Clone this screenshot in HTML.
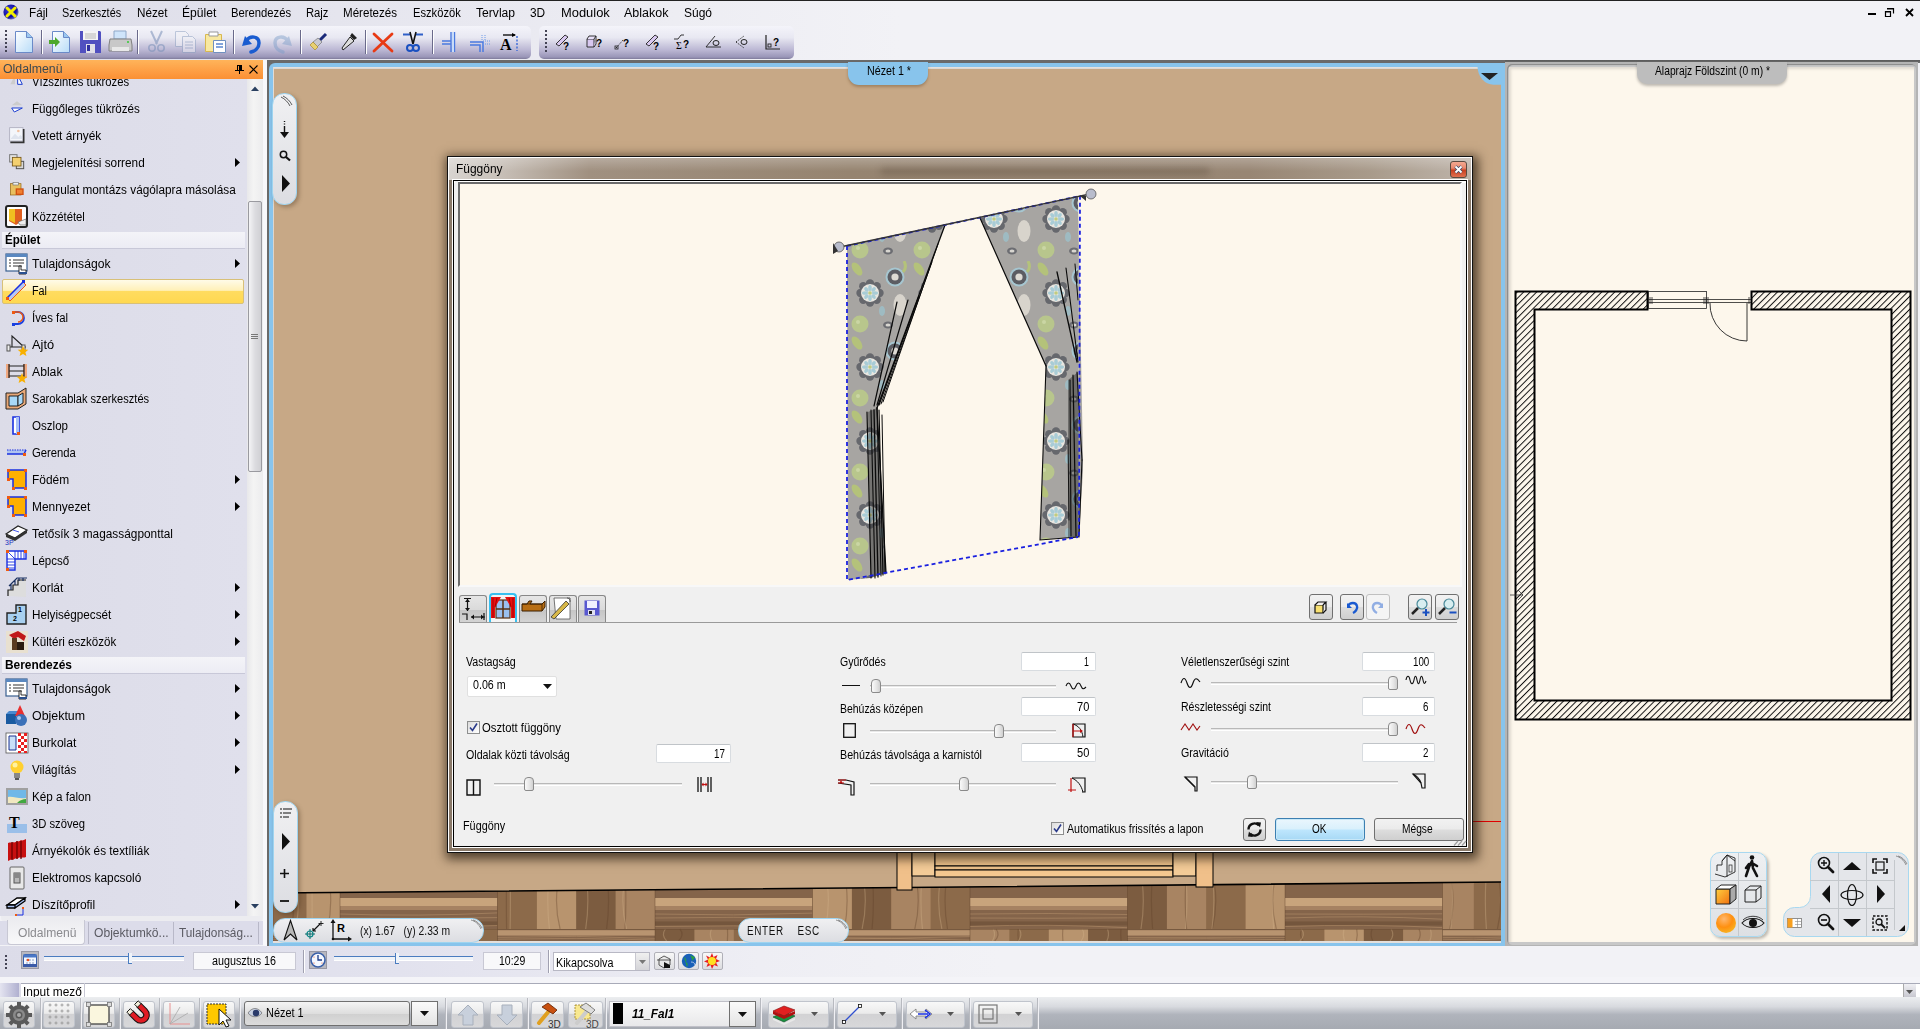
<!DOCTYPE html>
<html><head><meta charset="utf-8"><title>Függöny</title>
<style>
*{margin:0;padding:0;box-sizing:border-box}
html,body{width:1920px;height:1029px;overflow:hidden}
body{position:relative;background:#f2f2f6;font-family:"Liberation Sans",sans-serif;font-size:12px;color:#000}
.a{position:absolute}
.t{position:absolute;white-space:nowrap;line-height:1}
svg{position:absolute;overflow:visible}

</style></head><body>
<!-- top dark line + menubar -->
<div class="a" style="left:0;top:0;width:1920px;height:60px;background:linear-gradient(90deg,#dcdce8 0px,#e8e8f0 450px,#f2f2f6 900px,#f2f2f6 1920px)"></div>
<div class="a" style="left:0;top:0;width:1920px;height:1px;background:#222"></div>
<!-- app icon -->
<svg style="left:3px;top:4px" width="16" height="16" viewBox="0 0 16 16">
 <defs><radialGradient id="gi" cx="0.35" cy="0.35" r="0.7"><stop offset="0" stop-color="#3a3ad8"/><stop offset="0.7" stop-color="#1010a0"/><stop offset="1" stop-color="#8080c0"/></radialGradient></defs>
 <circle cx="8" cy="8" r="7.6" fill="url(#gi)"/>
 <path d="M4 4 L12 12 M12 4 L4 12" stroke="#f4f000" stroke-width="3" stroke-linecap="round"/>
</svg>
<!-- window buttons -->
<div class="a" style="left:1868px;top:13px;width:8px;height:2px;background:#000"></div>
<svg style="left:1885px;top:8px" width="9" height="9" viewBox="0 0 9 9"><path d="M0.5 3.5h5v5h-5z M2.5 0.5h6v5" fill="none" stroke="#000" stroke-width="1.2"/><path d="M0 3h6v1.5H0z M2 0h7v1.5H2z" fill="#000"/></svg>
<svg style="left:1905px;top:8px" width="9" height="9" viewBox="0 0 9 9"><path d="M1 1L8 8M8 1L1 8" stroke="#000" stroke-width="1.8"/></svg>

<!-- toolbar 1 -->
<div class="a" style="left:0;top:26px;width:531px;height:33px;border-radius:0 5px 5px 0;background:linear-gradient(180deg,#f4f4fa 0%,#e8e8f2 35%,#bcb8d4 72%,#9a96b8 94%,#7e7a9a 100%)"></div>
<div class="a" style="left:539px;top:26px;width:255px;height:33px;border-radius:5px;background:linear-gradient(180deg,#f4f4fa 0%,#e8e8f2 35%,#bcb8d4 72%,#9a96b8 94%,#7e7a9a 100%)"></div>
<!-- grips -->
<div class="a" style="left:5px;top:30px;width:2px;height:24px;background:repeating-linear-gradient(180deg,#445 0 2px,transparent 2px 4px)"></div>
<div class="a" style="left:545px;top:30px;width:2px;height:24px;background:repeating-linear-gradient(180deg,#445 0 2px,transparent 2px 4px)"></div>
<!-- separators -->
<div class="a" style="left:41px;top:30px;width:1px;height:24px;background:#6a6a8a;box-shadow:1px 0 0 #fff"></div>
<div class="a" style="left:137px;top:30px;width:1px;height:24px;background:#6a6a8a;box-shadow:1px 0 0 #fff"></div>
<div class="a" style="left:233px;top:30px;width:1px;height:24px;background:#6a6a8a;box-shadow:1px 0 0 #fff"></div>
<div class="a" style="left:300px;top:30px;width:1px;height:24px;background:#6a6a8a;box-shadow:1px 0 0 #fff"></div>
<div class="a" style="left:365px;top:30px;width:1px;height:24px;background:#6a6a8a;box-shadow:1px 0 0 #fff"></div>
<div class="a" style="left:432px;top:30px;width:1px;height:24px;background:#6a6a8a;box-shadow:1px 0 0 #fff"></div>
<!-- icons toolbar1 -->
<svg style="left:15px;top:31px" width="18" height="22" viewBox="0 0 18 22"><defs><linearGradient id="gp" x1="0" y1="0" x2="1" y2="1"><stop offset="0" stop-color="#fff"/><stop offset="1" stop-color="#b8dcf8"/></linearGradient></defs><path d="M0.5 0.5h11l6 6v15h-17z" fill="url(#gp)" stroke="#6a8ac8"/><path d="M11.5 0.5v6h6" fill="#9cc8f0" stroke="#6a8ac8"/></svg>
<svg style="left:49px;top:31px" width="22" height="22" viewBox="0 0 22 22"><path d="M3.5 0.5h11l6 6v15h-17z" fill="url(#gp)" stroke="#6a8ac8"/><path d="M14.5 0.5v6h6" fill="#9cc8f0" stroke="#6a8ac8"/><path d="M0 9h6v-3l5 5l-5 5v-3h-6z" fill="#4ca82c"/></svg>
<svg style="left:80px;top:31px" width="21" height="22" viewBox="0 0 21 22"><path d="M0 0h20l1 1v21h-21z" fill="#5050c0"/><rect x="3" y="0" width="15" height="9" fill="#f4f4f4"/><path d="M5 3h11M5 5h11M5 7h11" stroke="#aaa" stroke-width="0.8"/><rect x="6" y="13" width="9" height="9" fill="#e0e0e8"/><rect x="7" y="14" width="3" height="6" fill="#3030a0"/></svg>
<svg style="left:109px;top:31px" width="23" height="22" viewBox="0 0 23 22"><path d="M5 0h12v8h-12z" fill="#cfe4fa" stroke="#90a8c8"/><path d="M1 8h21l1 6v6h-23v-6z" fill="#c8c8c8" stroke="#808080"/><path d="M3 16h17v4h-17z" fill="#e8e8e8"/><circle cx="19" cy="11" r="1" fill="#3c3"/></svg>
<svg style="left:148px;top:31px" width="17" height="22" viewBox="0 0 17 22" opacity="0.55"><path d="M3 0l6 13M14 0l-6 13" stroke="#7a90b8" stroke-width="2"/><circle cx="4" cy="17" r="3.2" fill="none" stroke="#7a90b8" stroke-width="1.6"/><circle cx="13" cy="17" r="3.2" fill="none" stroke="#7a90b8" stroke-width="1.6"/></svg>
<svg style="left:175px;top:31px" width="21" height="22" viewBox="0 0 21 22" opacity="0.5"><path d="M0.5 0.5h10l3 3v12h-13z" fill="#f4f4f8" stroke="#8ca0c0"/><path d="M7.5 5.5h10l3 3v13h-13z" fill="#f4f4f8" stroke="#8ca0c0"/><path d="M10 11h8M10 14h8M10 17h8" stroke="#8ca0c0"/></svg>
<svg style="left:205px;top:31px" width="21" height="22" viewBox="0 0 21 22"><path d="M0.5 3.5h16v17h-16z" fill="#f8e8a0" stroke="#d8b850"/><path d="M4 1h9v4h-9z" fill="#fff" stroke="#999"/><path d="M8.5 9.5h12v12h-12z" fill="#fff" stroke="#7090c0"/><path d="M11 13h7M11 16h7" stroke="#5a86d0" stroke-width="1.5"/></svg>
<svg style="left:240px;top:31px" width="22" height="22" viewBox="0 0 22 22"><path d="M5 5 L2 15 L12 13" fill="#1a5cd0"/><path d="M6 10 C10 4 19 5 19 12 C19 17 15 20 11 21" fill="none" stroke="#1a5cd0" stroke-width="3.5" stroke-linecap="round"/></svg>
<svg style="left:272px;top:31px" width="22" height="22" viewBox="0 0 22 22" opacity="0.45"><path d="M17 5 L20 15 L10 13" fill="#7a9cc8"/><path d="M16 10 C12 4 3 5 3 12 C3 17 7 20 11 21" fill="none" stroke="#7a9cc8" stroke-width="3.5" stroke-linecap="round"/></svg>
<svg style="left:310px;top:33px" width="17" height="18" viewBox="0 0 17 18"><path d="M10 7l6-6" stroke="#1a2a7a" stroke-width="3"/><path d="M3 9l5-4l4 4l-5 5z" fill="#c8c8d0" stroke="#666" stroke-width="0.6"/><path d="M0 12l3-3l5 5l-3 3z" fill="#e8d070" stroke="#a08020" stroke-width="0.6"/></svg>
<svg style="left:341px;top:32px" width="17" height="20" viewBox="0 0 17 20"><path d="M11 1l5 5l-3 2l-4-4z" fill="#222"/><path d="M9 5l-8 11l1 2l11-9z" fill="#ddd" stroke="#222" stroke-width="1"/></svg>
<svg style="left:372px;top:32px" width="22" height="21" viewBox="0 0 22 21"><path d="M2 2L20 19M20 2L2 19" stroke="#e83a14" stroke-width="2.8" stroke-linecap="round"/></svg>
<svg style="left:403px;top:32px" width="20" height="21" viewBox="0 0 20 21"><path d="M0 2.5h7M13 2.5h7" stroke="#3060c8" stroke-width="2"/><path d="M7 0l3 12M13 0l-3 12" stroke="#111" stroke-width="1.6"/><circle cx="7" cy="16" r="3" fill="none" stroke="#1a50c0" stroke-width="2"/><circle cx="13" cy="16" r="3" fill="none" stroke="#1a50c0" stroke-width="2"/></svg>
<svg style="left:442px;top:32px" width="14" height="20" viewBox="0 0 14 20"><path d="M0 9h9M0 12h9" stroke="#4a7ae0" stroke-width="1.4"/><path d="M9 0v20M12.5 0v20" stroke="#4a7ae0" stroke-width="1.4"/><path d="M10 0v20h2v-20z" fill="#c8dcf8"/></svg>
<svg style="left:470px;top:35px" width="20" height="17" viewBox="0 0 20 17"><path d="M0 7h13v10M0 10h10v7" fill="none" stroke="#4a7ae0" stroke-width="1.5"/><path d="M12 0v6M15 0v6M13 6h7M13 9h7" stroke="#6a9ae8" stroke-width="1" stroke-dasharray="1 1"/></svg>
<svg style="left:500px;top:33px" width="19" height="19" viewBox="0 0 19 19"><path d="M3 2h12" stroke="#000" stroke-width="1.3"/><path d="M12 0l4 2l-4 2z" fill="#000"/><path d="M17 3v15" stroke="#3a6ad8" stroke-width="1.4" stroke-dasharray="2 1.5"/><text x="0" y="17" font-family="Liberation Serif" font-weight="bold" font-size="16">A</text></svg>
<!-- icons toolbar2 -->
<g></g>
<svg style="left:555px;top:34px" width="17" height="17" viewBox="0 0 17 17"><path d="M1 10l9-9l3 2l-9 9z" fill="#d8c8f0" stroke="#222" stroke-width="0.9"/><text x="8" y="16" font-family="Liberation Sans" font-weight="bold" font-size="10">?</text></svg>
<svg style="left:586px;top:34px" width="17" height="17" viewBox="0 0 17 17"><path d="M1 5h7v8h-7z" fill="#d8c8f0" stroke="#222" stroke-width="0.9"/><path d="M1 5l2-3h7l-2 3M8 13l2-3v-8" fill="#e8e0f8" stroke="#222" stroke-width="0.9"/><text x="10" y="13" font-family="Liberation Sans" font-weight="bold" font-size="10">?</text></svg>
<svg style="left:615px;top:34px" width="17" height="17" viewBox="0 0 17 17"><path d="M1 14l8-9" stroke="#222" stroke-width="1" stroke-dasharray="1.5 1.5"/><rect x="0" y="12" width="3" height="3" fill="none" stroke="#222" stroke-width="0.8"/><text x="8" y="13" font-family="Liberation Sans" font-weight="bold" font-size="10">?</text></svg>
<svg style="left:645px;top:34px" width="17" height="17" viewBox="0 0 17 17"><path d="M1 10l9-9l3 2l-9 9z" fill="#d8c8f0" stroke="#222" stroke-width="0.9"/><text x="8" y="16" font-family="Liberation Sans" font-weight="bold" font-size="10">?</text></svg>
<svg style="left:674px;top:34px" width="18" height="17" viewBox="0 0 18 17"><path d="M0 5h4l3-4h3" fill="none" stroke="#222" stroke-width="0.9"/><text x="2" y="15" font-family="Liberation Serif" font-size="10">Σ</text><text x="9" y="14" font-family="Liberation Sans" font-weight="bold" font-size="10">?</text></svg>
<svg style="left:705px;top:34px" width="17" height="14" viewBox="0 0 17 14"><path d="M1 13l9-11M1 13h15" fill="none" stroke="#222" stroke-width="0.9"/><ellipse cx="11" cy="9" rx="3" ry="2.5" fill="none" stroke="#222"/></svg>
<svg style="left:735px;top:35px" width="16" height="14" viewBox="0 0 16 14"><path d="M1 7l8-6M1 7l8 6" fill="none" stroke="#222" stroke-width="0.9" stroke-dasharray="1.5 1.2"/><ellipse cx="9" cy="7" rx="3" ry="2.5" fill="none" stroke="#222"/></svg>
<svg style="left:765px;top:35px" width="16" height="15" viewBox="0 0 16 15"><path d="M1 0v14h14" fill="none" stroke="#222" stroke-width="1.2"/><rect x="3" y="9" width="3" height="3" fill="none" stroke="#222" stroke-width="0.9"/><text x="8" y="11" font-family="Liberation Sans" font-weight="bold" font-size="10">?</text></svg>

<div class="t" id="f41" style="left:28.5px;top:7.44px;font-size:12.3px;transform-origin:0 0;transform:scaleX(0.9532)">Fájl</div>
<div class="t" id="f42" style="left:62.2px;top:7.44px;font-size:12.3px;transform-origin:0 0;transform:scaleX(0.8823)">Szerkesztés</div>
<div class="t" id="f43" style="left:136.6px;top:7.44px;font-size:12.3px;transform-origin:0 0;transform:scaleX(0.9525)">Nézet</div>
<div class="t" id="f44" style="left:182.1px;top:7.44px;font-size:12.3px;transform-origin:0 0;transform:scaleX(0.9835)">Épület</div>
<div class="t" id="f45" style="left:231.3px;top:7.44px;font-size:12.3px;transform-origin:0 0;transform:scaleX(0.9156)">Berendezés</div>
<div class="t" id="f46" style="left:306.3px;top:7.44px;font-size:12.3px;transform-origin:0 0;transform:scaleX(0.9143)">Rajz</div>
<div class="t" id="f47" style="left:343.4px;top:7.44px;font-size:12.3px;transform-origin:0 0;transform:scaleX(0.9421)">Méretezés</div>
<div class="t" id="f48" style="left:412.5px;top:7.44px;font-size:12.3px;transform-origin:0 0;transform:scaleX(0.9083)">Eszközök</div>
<div class="t" id="f49" style="left:476.4px;top:7.44px;font-size:12.3px;transform-origin:0 0;transform:scaleX(0.9864)">Tervlap</div>
<div class="t" id="f50" style="left:530.1px;top:7.44px;font-size:12.3px;transform-origin:0 0;transform:scaleX(0.9660)">3D</div>
<div class="t" id="f51" style="left:560.7px;top:7.44px;font-size:12.3px;transform-origin:0 0;transform:scaleX(1.0498)">Modulok</div>
<div class="t" id="f52" style="left:624.2px;top:7.44px;font-size:12.3px;transform-origin:0 0;transform:scaleX(1.0149)">Ablakok</div>
<div class="t" id="f53" style="left:683.5px;top:7.44px;font-size:12.3px;transform-origin:0 0;transform:scaleX(0.9750)">Súgó</div>
<!-- sidebar -->
<div class="a" style="left:0;top:60px;width:263px;height:19px;background:linear-gradient(180deg,#ffb45a,#fd9a40 70%,#fa9034)"></div>
<div class="t" id="f1" style="left:2.5px;top:63.34px;font-size:12.3px;color:#3c4a50;transform-origin:0 0;transform:scaleX(1.0005)">Oldalmenü</div>
<svg style="left:235px;top:65px" width="9" height="9" viewBox="0 0 9 9"><path d="M2 0h5v5h-5z" fill="#000"/><path d="M0 5h9v1h-9zM4 6h1v3h-1z" fill="#000"/><path d="M3 1h1v4h-1z" fill="#ff9a40"/></svg>
<svg style="left:249px;top:65px" width="9" height="9" viewBox="0 0 9 9"><path d="M0.5 0.5L8.5 8.5M8.5 0.5L0.5 8.5" stroke="#000" stroke-width="1.1"/></svg>
<div class="a" style="left:263px;top:60px;width:4px;height:886px;background:#f8f8fb"></div>
<div class="a" style="left:0;top:79px;width:247px;height:837px;background:linear-gradient(90deg,#dcdce8,#e0e0ec);overflow:hidden">
<svg style="left:9px;top:-6px" width="16" height="16" viewBox="0 0 24 24"><path d="M9 3v14h-7z" fill="#ccc"/><path d="M13 3v14h7z" fill="#fff" stroke="#1a3cd0" stroke-width="1.5"/></svg>
<div class="t" id="f2" style="left:32.3px;top:-3.50px;font-size:12px;transform-origin:0 0;transform:scaleX(0.9393)">Vízszintes tükrözés</div>
<svg style="left:9px;top:21px" width="16" height="16" viewBox="0 0 24 24"><path d="M4 8h16l-8-6z" fill="#ccc"/><path d="M4 12h16l-12 6z" fill="#fff" stroke="#1a3cd0" stroke-width="1.5"/></svg>
<div class="t" id="f3" style="left:32.3px;top:23.50px;font-size:12px;transform-origin:0 0;transform:scaleX(0.9685)">Függőleges tükrözés</div>
<svg style="left:9px;top:48px" width="16" height="16" viewBox="0 0 24 24"><rect x="1" y="1" width="20" height="20" fill="#f4f6fa" stroke="#aab" stroke-width="1.2"/><path d="M3 17l6-7l5 5l3-3l3 3v3h-17z" fill="#dfe4ee"/><circle cx="14" cy="6" r="2" fill="#f0c0a0"/><path d="M22 3v20h-20" fill="none" stroke="#333" stroke-width="2.5"/></svg>
<div class="t" id="f4" style="left:32.3px;top:50.50px;font-size:12px;transform-origin:0 0;transform:scaleX(0.9893)">Vetett árnyék</div>
<svg style="left:9px;top:75px" width="16" height="16" viewBox="0 0 24 24"><rect x="1" y="1" width="11" height="11" fill="#e8e8e8" stroke="#777" stroke-width="1.5"/><rect x="11" y="11" width="11" height="11" fill="#d8d8d8" stroke="#555" stroke-width="1.5"/><rect x="5" y="5" width="13" height="13" fill="#f4d070" stroke="#705010" stroke-width="1.2"/></svg>
<div class="t" id="f5" style="left:32.3px;top:77.50px;font-size:12px;transform-origin:0 0;transform:scaleX(0.9823)">Megjelenítési sorrend</div>
<svg style="left:235px;top:79px" width="5" height="9" viewBox="0 0 5 9"><path d="M0 0l5 4.5l-5 4.5z" fill="#000"/></svg>
<svg style="left:9px;top:102px" width="16" height="16" viewBox="0 0 24 24"><rect x="2" y="4" width="16" height="17" fill="#e8c060" stroke="#906010"/><rect x="6" y="2" width="8" height="4" fill="#eee" stroke="#777"/><rect x="10" y="11" width="12" height="10" fill="#d05010"/><rect x="12" y="13" width="8" height="6" fill="#f08030"/></svg>
<div class="t" id="f6" style="left:32.3px;top:104.50px;font-size:12px;transform-origin:0 0;transform:scaleX(0.9819)">Hangulat montázs vágólapra másolása</div>
<svg style="left:5px;top:126px" width="24" height="24" viewBox="0 0 24 24"><rect x="1" y="1" width="21" height="21" rx="2" fill="#fff" stroke="#222" stroke-width="2"/><path d="M4 4h13v12l-6 4l-7-4z" fill="#e06020"/><path d="M4 4h6v14l-6-3z" fill="#f0c020"/><path d="M13 17l8-3v6h-6z" fill="#eee" stroke="#555" stroke-width="0.6"/></svg>
<div class="t" id="f7" style="left:32.3px;top:131.50px;font-size:12px;transform-origin:0 0;transform:scaleX(0.9439)">Közzététel</div>
<div class="a" style="left:2px;top:153px;width:243px;height:17px;background:linear-gradient(180deg,#f4f4f8,#ececf4);border-bottom:1px solid #c8c8d8"></div>
<div class="t" id="f8" style="left:5px;top:155.30px;font-size:12px;font-weight:bold;transform-origin:0 0;transform:scaleX(0.9653)">Épület</div>
<svg style="left:5px;top:173px" width="24" height="24" viewBox="0 0 24 24"><rect x="1" y="2" width="21" height="17" fill="#fff" stroke="#3a6090" stroke-width="1.2"/><rect x="1" y="2" width="21" height="3" fill="#5a88c0"/><path d="M4 8h2M8 8h11M4 11h2M8 11h11M4 14h2M8 14h9" stroke="#333" stroke-width="1.1"/><path d="M14 22v-8h2v4h5v4z" fill="#fff" stroke="#000" stroke-width="0.8"/><rect x="14" y="20" width="8" height="2" fill="#2a5090"/></svg>
<div class="t" id="f9" style="left:32.3px;top:178.50px;font-size:12px;transform-origin:0 0;transform:scaleX(1.0115)">Tulajdonságok</div>
<svg style="left:235px;top:180px" width="5" height="9" viewBox="0 0 5 9"><path d="M0 0l5 4.5l-5 4.5z" fill="#000"/></svg>
<div class="a" style="left:2px;top:199.5px;width:242px;height:25px;border:1px solid #d8c078;border-radius:2px;background:linear-gradient(180deg,#fffbe8 0%,#fff0b8 45%,#ffdc60 50%,#ffd850 100%)"></div>
<svg style="left:5px;top:200px" width="24" height="24" viewBox="0 0 24 24"><path d="M2 19L18 3l3 3L5 22z" fill="#b8c8f0" stroke="#f05a10" stroke-width="1"/><path d="M2 19L19 2" stroke="#1a30e0" stroke-width="1.6"/><rect x="17" y="1" width="3" height="3" fill="#1a30e0"/><rect x="1" y="18" width="3" height="3" fill="#f05a10"/></svg>
<div class="t" id="f10" style="left:32.3px;top:205.50px;font-size:12px;transform-origin:0 0;transform:scaleX(0.8997)">Fal</div>
<svg style="left:5px;top:227px" width="24" height="24" viewBox="0 0 24 24"><path d="M8 6h5a6 6 0 0 1 0 12h-5" fill="none" stroke="#1a40e0" stroke-width="1.8"/><path d="M9 6h4a5 5 0 0 1 0 10" fill="none" stroke="#f05a10" stroke-width="1.5"/><rect x="7" y="5" width="3" height="3" fill="#f05a10"/><rect x="7" y="17" width="3" height="3" fill="#1a40e0"/></svg>
<div class="t" id="f11" style="left:32.3px;top:232.50px;font-size:12px;transform-origin:0 0;transform:scaleX(0.9470)">Íves fal</div>
<svg style="left:5px;top:254px" width="24" height="24" viewBox="0 0 24 24"><path d="M3 14h18" stroke="#222"/><rect x="2" y="12" width="3" height="6" fill="#eee" stroke="#555"/><path d="M7 14v-11l12 11" fill="none" stroke="#222" stroke-width="1.1"/><rect x="17" y="12" width="3" height="6" fill="#eee" stroke="#555"/><path d="M18 13l1.5 3.5l3.8 0.3l-2.9 2.4l1 3.7l-3.4-2l-3.4 2l1-3.7l-2.9-2.4l3.8-0.3z" fill="#f8b000"/></svg>
<div class="t" id="f12" style="left:32.3px;top:259.50px;font-size:12px;transform-origin:0 0;transform:scaleX(1.0683)">Ajtó</div>
<svg style="left:5px;top:281px" width="24" height="24" viewBox="0 0 24 24"><rect x="1" y="4" width="4" height="14" fill="#f0a880"/><rect x="18" y="4" width="4" height="14" fill="#f0a880"/><path d="M4 6h15M4 16h15M4 11h15" stroke="#222" stroke-width="1.2"/><path d="M4 4v14M19 4v14" stroke="#222" stroke-width="1.2"/><path d="M17 13l1.5 3.5l3.8 0.3l-2.9 2.4l1 3.7l-3.4-2l-3.4 2l1-3.7l-2.9-2.4l3.8-0.3z" fill="#f8b000"/></svg>
<div class="t" id="f13" style="left:32.3px;top:286.50px;font-size:12px;transform-origin:0 0;transform:scaleX(1.0156)">Ablak</div>
<svg style="left:5px;top:308px" width="24" height="24" viewBox="0 0 24 24"><path d="M1 6h12l8-5v16l-8 5h-12z" fill="#e8a878" stroke="#222" stroke-width="1"/><path d="M4 9h9v10h-9z" fill="#a8d8f8" stroke="#222"/><path d="M13 9l5-3v10l-5 3z" fill="#a8d8f8" stroke="#222"/></svg>
<div class="t" id="f14" style="left:32.3px;top:313.50px;font-size:12px;transform-origin:0 0;transform:scaleX(0.9240)">Sarokablak szerkesztés</div>
<svg style="left:5px;top:335px" width="24" height="24" viewBox="0 0 24 24"><path d="M8 3h6v17h-6z" fill="#fff" stroke="#1a30e0" stroke-width="1.6"/><path d="M11 3h3v17h-3z" fill="#a8c0f8"/><rect x="12" y="18" width="3" height="3" fill="#f05a10"/></svg>
<div class="t" id="f15" style="left:32.3px;top:340.50px;font-size:12px;transform-origin:0 0;transform:scaleX(0.9636)">Oszlop</div>
<svg style="left:5px;top:362px" width="24" height="24" viewBox="0 0 24 24"><path d="M2 9h19l-2 4h-17z" fill="#b0c4f0"/><path d="M2 13h17l2-4" fill="none" stroke="#1a30e0" stroke-width="1.5"/><path d="M2 9h19" stroke="#1a30e0" stroke-width="1" stroke-dasharray="1.5 1"/><rect x="18" y="12" width="3" height="3" fill="#f05a10"/></svg>
<div class="t" id="f16" style="left:32.3px;top:367.50px;font-size:12px;transform-origin:0 0;transform:scaleX(0.9400)">Gerenda</div>
<svg style="left:5px;top:389px" width="24" height="24" viewBox="0 0 24 24"><path d="M3 2h18v18h-13v-9h-5z" fill="#ffb000" stroke="#1a30e0" stroke-width="1.5"/><rect x="2" y="1" width="3" height="3" fill="#f05a10"/><rect x="19" y="1" width="3" height="3" fill="#f05a10"/><rect x="19" y="19" width="3" height="3" fill="#f05a10"/><rect x="7" y="19" width="3" height="3" fill="#f05a10"/><rect x="2" y="10" width="3" height="3" fill="#f05a10"/></svg>
<div class="t" id="f17" style="left:32.3px;top:394.50px;font-size:12px;transform-origin:0 0;transform:scaleX(0.9931)">Födém</div>
<svg style="left:235px;top:396px" width="5" height="9" viewBox="0 0 5 9"><path d="M0 0l5 4.5l-5 4.5z" fill="#000"/></svg>
<svg style="left:5px;top:416px" width="24" height="24" viewBox="0 0 24 24"><path d="M3 2h18v18h-13v-9h-5z" fill="#ffb000" stroke="#1a30e0" stroke-width="1.5"/><rect x="2" y="1" width="3" height="3" fill="#f05a10"/><rect x="19" y="1" width="3" height="3" fill="#f05a10"/><rect x="19" y="19" width="3" height="3" fill="#f05a10"/><rect x="7" y="19" width="3" height="3" fill="#f05a10"/><rect x="2" y="10" width="3" height="3" fill="#f05a10"/></svg>
<div class="t" id="f18" style="left:32.3px;top:421.50px;font-size:12px;transform-origin:0 0;transform:scaleX(0.9931)">Mennyezet</div>
<svg style="left:235px;top:423px" width="5" height="9" viewBox="0 0 5 9"><path d="M0 0l5 4.5l-5 4.5z" fill="#000"/></svg>
<svg style="left:5px;top:443px" width="24" height="24" viewBox="0 0 24 24"><path d="M1 12l12-8l9 4l-12 8z" fill="#fff" stroke="#222" stroke-width="1.2"/><path d="M1 12v3l9 4l12-8v-3l-12 8z" fill="#333"/><text x="0" y="23" font-family="Liberation Sans" font-size="7" fill="#1a30c0">3P</text><path d="M8 8l6 2" stroke="#1a30e0" stroke-width="0.8"/></svg>
<div class="t" id="f19" style="left:32.3px;top:448.50px;font-size:12px;transform-origin:0 0;transform:scaleX(0.9876)">Tetősík 3 magasságponttal</div>
<svg style="left:5px;top:470px" width="24" height="24" viewBox="0 0 24 24"><path d="M2 2h19v8h-11v11h-8z" fill="#fff" stroke="#1a30e0" stroke-width="1.4"/><path d="M10 2v8M13 2v8M16 2v8M19 2v8M2 10h8M2 13h8M2 16h8M2 19h8M2 2l8 8" stroke="#1a30e0" stroke-width="0.9"/><rect x="1" y="1" width="3" height="3" fill="#f05a10"/><rect x="19" y="1" width="3" height="3" fill="#f05a10"/><rect x="1" y="19" width="3" height="3" fill="#f05a10"/></svg>
<div class="t" id="f20" style="left:32.3px;top:475.50px;font-size:12px;transform-origin:0 0;transform:scaleX(0.9586)">Lépcső</div>
<svg style="left:5px;top:497px" width="24" height="24" viewBox="0 0 24 24"><path d="M3 20v-6h5v-5h5v-5h8v17z" fill="#ddd"/><path d="M3 20v-6h5v-5h5v-5h8" fill="none" stroke="#222" stroke-width="1.2"/><path d="M4 10l8-8h10M6 8v6M10 4v5M14 2v3M18 2v3" stroke="#1a3060" stroke-width="1.2" fill="none"/></svg>
<div class="t" id="f21" style="left:32.3px;top:502.50px;font-size:12px;transform-origin:0 0;transform:scaleX(0.9981)">Korlát</div>
<svg style="left:235px;top:504px" width="5" height="9" viewBox="0 0 5 9"><path d="M0 0l5 4.5l-5 4.5z" fill="#000"/></svg>
<svg style="left:5px;top:524px" width="24" height="24" viewBox="0 0 24 24"><path d="M2 21v-11h9v-8h10v19z" fill="#a8d0f0" stroke="#222" stroke-width="1.4"/><text x="13" y="9" font-family="Liberation Sans" font-weight="bold" font-size="7">1</text><text x="8" y="18" font-family="Liberation Sans" font-weight="bold" font-size="7">2</text></svg>
<div class="t" id="f22" style="left:32.3px;top:529.50px;font-size:12px;transform-origin:0 0;transform:scaleX(0.9745)">Helyiségpecsét</div>
<svg style="left:235px;top:531px" width="5" height="9" viewBox="0 0 5 9"><path d="M0 0l5 4.5l-5 4.5z" fill="#000"/></svg>
<svg style="left:5px;top:551px" width="24" height="24" viewBox="0 0 24 24"><rect x="1" y="1" width="22" height="22" fill="#e8e0d0"/><path d="M4 5l9-4l8 5l-2 5l-6-4l-4 2z" fill="#c01818"/><path d="M7 8h5v12h-5z" fill="#5a3a20"/><path d="M12 12h7v8h-7z" fill="#2a1a10"/></svg>
<div class="t" id="f23" style="left:32.3px;top:556.50px;font-size:12px;transform-origin:0 0;transform:scaleX(0.9648)">Kültéri eszközök</div>
<svg style="left:235px;top:558px" width="5" height="9" viewBox="0 0 5 9"><path d="M0 0l5 4.5l-5 4.5z" fill="#000"/></svg>
<div class="a" style="left:2px;top:578px;width:243px;height:17px;background:linear-gradient(180deg,#f4f4f8,#ececf4);border-bottom:1px solid #c8c8d8"></div>
<div class="t" id="f24" style="left:5px;top:580.30px;font-size:12px;font-weight:bold;transform-origin:0 0;transform:scaleX(0.9929)">Berendezés</div>
<svg style="left:5px;top:598px" width="24" height="24" viewBox="0 0 24 24"><rect x="1" y="2" width="21" height="17" fill="#fff" stroke="#3a6090" stroke-width="1.2"/><rect x="1" y="2" width="21" height="3" fill="#5a88c0"/><path d="M4 8h2M8 8h11M4 11h2M8 11h11M4 14h2M8 14h9" stroke="#333" stroke-width="1.1"/><path d="M14 22v-8h2v4h5v4z" fill="#fff" stroke="#000" stroke-width="0.8"/><rect x="14" y="20" width="8" height="2" fill="#2a5090"/></svg>
<div class="t" id="f25" style="left:32.3px;top:603.50px;font-size:12px;transform-origin:0 0;transform:scaleX(1.0115)">Tulajdonságok</div>
<svg style="left:235px;top:605px" width="5" height="9" viewBox="0 0 5 9"><path d="M0 0l5 4.5l-5 4.5z" fill="#000"/></svg>
<svg style="left:5px;top:625px" width="24" height="24" viewBox="0 0 24 24"><path d="M1 10h10v10h-10z" fill="#1a5aa0"/><path d="M1 10l3-3h10l-3 3z" fill="#4a8ad0"/><path d="M15 1l-5 11h10z" fill="#e83030"/><circle cx="16" cy="16" r="6" fill="#3a70b8"/><circle cx="14" cy="14" r="2" fill="#a8c8f0"/></svg>
<div class="t" id="f26" style="left:32.3px;top:630.50px;font-size:12px;transform-origin:0 0;transform:scaleX(1.0339)">Objektum</div>
<svg style="left:235px;top:632px" width="5" height="9" viewBox="0 0 5 9"><path d="M0 0l5 4.5l-5 4.5z" fill="#000"/></svg>
<svg style="left:5px;top:652px" width="24" height="24" viewBox="0 0 24 24"><rect x="1" y="2" width="22" height="20" fill="#fff" stroke="#555" stroke-width="0.8"/><path d="M4 5h7v14h-7z" fill="#c8e0f8" stroke="#1a3090"/><path d="M13 2h3v3h-3zM19 2h3v3h-3zM16 5h3v3h-3zM13 8h3v3h-3zM19 8h3v3h-3zM16 11h3v3h-3zM13 14h3v3h-3zM19 14h3v3h-3zM16 17h3v3h-3zM13 20h3v2h-3zM19 20h3v2h-3z" fill="#e82020"/></svg>
<div class="t" id="f27" style="left:32.3px;top:657.50px;font-size:12px;transform-origin:0 0;transform:scaleX(1.0084)">Burkolat</div>
<svg style="left:235px;top:659px" width="5" height="9" viewBox="0 0 5 9"><path d="M0 0l5 4.5l-5 4.5z" fill="#000"/></svg>
<svg style="left:5px;top:679px" width="24" height="24" viewBox="0 0 24 24"><circle cx="12" cy="9" r="6.5" fill="#ffd030"/><circle cx="10" cy="7" r="2.5" fill="#fff2a0"/><rect x="9" y="15" width="6" height="5" fill="#888"/><rect x="10" y="20" width="4" height="2" fill="#555"/></svg>
<div class="t" id="f28" style="left:32.3px;top:684.50px;font-size:12px;transform-origin:0 0;transform:scaleX(0.9648)">Világítás</div>
<svg style="left:235px;top:686px" width="5" height="9" viewBox="0 0 5 9"><path d="M0 0l5 4.5l-5 4.5z" fill="#000"/></svg>
<svg style="left:5px;top:706px" width="24" height="24" viewBox="0 0 24 24"><rect x="1" y="3" width="22" height="17" fill="#a0a0a0"/><rect x="3" y="5" width="18" height="13" fill="#70b8e8"/><path d="M3 12c5-1 10 2 18 1v5h-18z" fill="#f0e8c0"/><path d="M12 18c3-3 6-4 9-4v4z" fill="#40a840"/></svg>
<div class="t" id="f29" style="left:32.3px;top:711.50px;font-size:12px;transform-origin:0 0;transform:scaleX(0.9733)">Kép a falon</div>
<svg style="left:5px;top:733px" width="24" height="24" viewBox="0 0 24 24"><rect x="2" y="12" width="20" height="9" fill="#8ab8e8" opacity="0.8"/><text x="4" y="16" font-family="Liberation Serif" font-weight="bold" font-size="16">T</text></svg>
<div class="t" id="f30" style="left:32.3px;top:738.50px;font-size:12px;transform-origin:0 0;transform:scaleX(0.9365)">3D szöveg</div>
<svg style="left:5px;top:760px" width="24" height="24" viewBox="0 0 24 24"><path d="M3 4c2-1 4 0 5-1c1 1 3 0 4-1c1 1 3 0 4-1c1 1 3 0 5-1v18c-2 1-4 0-5 1c-1-1-3 0-4 1c-1-1-3 0-4 1c-1-1-3 0-5 1z" fill="#c81010"/><path d="M7 3v18M12 2v18M16 2v18" stroke="#600" stroke-width="1.2"/></svg>
<div class="t" id="f31" style="left:32.3px;top:765.50px;font-size:12px;transform-origin:0 0;transform:scaleX(0.9825)">Árnyékolók és textíliák</div>
<svg style="left:5px;top:787px" width="24" height="24" viewBox="0 0 24 24"><rect x="5" y="1" width="14" height="22" rx="1" fill="#e8e8e8" stroke="#666"/><rect x="9" y="7" width="6" height="10" fill="#b8b8b8" stroke="#555"/><rect x="9" y="7" width="6" height="5" fill="#888"/></svg>
<div class="t" id="f32" style="left:32.3px;top:792.50px;font-size:12px;transform-origin:0 0;transform:scaleX(0.9872)">Elektromos kapcsoló</div>
<svg style="left:5px;top:814px" width="24" height="24" viewBox="0 0 24 24"><path d="M2 12l10-7l8 0l-10 7z" fill="#fff" stroke="#000" stroke-width="1.3"/><path d="M2 12v3l8-0v-3zM10 15l10-7v-3l-10 7z" fill="#a8c0f0" stroke="#000" stroke-width="1.3"/><path d="M11 22h7v-7" fill="none" stroke="#1a30e0" stroke-width="1"/><rect x="10" y="21" width="2" height="2" fill="#f05a10"/><rect x="17" y="14" width="2" height="2" fill="#f05a10"/></svg>
<div class="t" id="f33" style="left:32.3px;top:819.50px;font-size:12px;transform-origin:0 0;transform:scaleX(0.9975)">Díszítőprofil</div>
<svg style="left:235px;top:821px" width="5" height="9" viewBox="0 0 5 9"><path d="M0 0l5 4.5l-5 4.5z" fill="#000"/></svg>
</div>
<div class="a" style="left:247px;top:79px;width:16px;height:837px;background:linear-gradient(90deg,#e8e8ea,#f4f4f4 40%,#ececee)"></div>
<svg style="left:251px;top:86px" width="8" height="5" viewBox="0 0 8 5"><path d="M0 5l4-4.5l4 4.5z" fill="#2a4060"/></svg>
<svg style="left:251px;top:904px" width="8" height="5" viewBox="0 0 8 5"><path d="M0 0l4 4.5l4-4.5z" fill="#2a4060"/></svg>
<div class="a" style="left:248px;top:201px;width:14px;height:271px;border:1px solid #9a9aa0;border-radius:2px;background:linear-gradient(90deg,#f4f4f6,#dcdce0 50%,#d0d0d4)"></div>
<div class="a" style="left:251px;top:334px;width:7px;height:6px;background:repeating-linear-gradient(180deg,#777 0 1px,transparent 1px 2px)"></div>
<div class="a" style="left:1px;top:916px;width:262px;height:5px;background:#ececf0;border-radius:0 0 3px 3px"></div>
<div class="a" style="left:0;top:921px;width:263px;height:24px;background:#dcdcea"></div>
<div class="a" style="left:7px;top:920px;width:78px;height:25px;border-radius:0 0 4px 4px;background:linear-gradient(180deg,#ececf0,#f8f8fa);border:1px solid #c8c8d4;border-top:none"></div>
<div class="t" id="f34" style="left:17.6px;top:927.30px;font-size:12px;color:#8a8a8e;transform-origin:0 0;transform:scaleX(1.0064)">Oldalmenü</div>
<div class="a" style="left:88px;top:922px;width:1px;height:22px;background:#b8b8c8"></div>
<div class="t" id="f35" style="left:94.2px;top:927.30px;font-size:12px;color:#5a5a62;transform-origin:0 0;transform:scaleX(1.0077)">Objektumkö...</div>
<div class="a" style="left:173px;top:922px;width:1px;height:22px;background:#b8b8c8"></div>
<div class="t" id="f36" style="left:179.3px;top:927.30px;font-size:12px;color:#5a5a62;transform-origin:0 0;transform:scaleX(0.9862)">Tulajdonság...</div>
<div class="a" style="left:258px;top:922px;width:1px;height:22px;background:#b8b8c8"></div>
<div class="a" style="left:267px;top:60px;width:1653px;height:3px;background:linear-gradient(180deg,#5a5a5a,#707070)"></div>
<div class="a" style="left:267px;top:60px;width:1238px;height:887px;background:#6a6a6a"></div>
<div class="a" style="left:269px;top:63px;width:1236px;height:884px;background:#88c4ec;border-radius:6px 0 0 0"></div>
<div class="a" style="left:273px;top:67px;width:1228px;height:876px;background:#c7a886;overflow:hidden">
<div class="a" style="left:0;top:0;width:1228px;height:2px;background:linear-gradient(180deg,#e8e6e4,#d8d2cc)"></div>
<div class="a" style="left:0;top:0;width:1px;height:876px;background:linear-gradient(180deg,#e0dcd8,#c8b8a4)"></div>
<svg style="left:0;top:0" width="1228" height="876" viewBox="0 0 1228 876">
<defs><clipPath id="fl"><path d="M0 826 L467 822 L1228 815 L1228 876 L0 876z"/></clipPath></defs>
<g clip-path="url(#fl)">
<rect x="0" y="810" width="1228" height="66" fill="#8c6a4c"/>
<defs>
<linearGradient id="wh" x1="0" y1="0" x2="0" y2="1"><stop offset="0" stop-color="#866850"/><stop offset="0.22" stop-color="#7a5c44"/><stop offset="0.32" stop-color="#c4a682"/><stop offset="0.5" stop-color="#b4946e"/><stop offset="0.62" stop-color="#80624a"/><stop offset="1" stop-color="#7a5c44"/></linearGradient>
<linearGradient id="wv" x1="0" y1="0" x2="1" y2="0"><stop offset="0" stop-color="#7a5636"/><stop offset="0.3" stop-color="#9c7654"/><stop offset="0.5" stop-color="#b89068"/><stop offset="0.7" stop-color="#8a6446"/><stop offset="1" stop-color="#9e7a58"/></linearGradient>
<linearGradient id="wv2" x1="0" y1="0" x2="1" y2="0"><stop offset="0" stop-color="#b89470"/><stop offset="0.35" stop-color="#d0b08a"/><stop offset="0.6" stop-color="#a8845e"/><stop offset="1" stop-color="#8c6a4c"/></linearGradient>
<linearGradient id="wh2" x1="0" y1="0" x2="0" y2="1"><stop offset="0" stop-color="#9a7858"/><stop offset="0.4" stop-color="#c4a07a"/><stop offset="0.7" stop-color="#8a6648"/><stop offset="1" stop-color="#a07c5c"/></linearGradient>
</defs>
<rect x="0.0" y="812" width="34.0" height="50" fill="#8c6a4a"/>
<path d="M19.6 812 Q22.0 837.0 18.9 862" stroke="#5e4028" stroke-width="1.2" opacity="0.35" fill="none"/>
<path d="M23.7 812 Q28.1 837.0 22.3 862" stroke="#d4b48c" stroke-width="1.2" opacity="0.35" fill="none"/>
<rect x="33.5" y="812" width="34.0" height="50" fill="#b8946e"/>
<path d="M55.9 812 Q60.1 837.0 54.6 862" stroke="#5e4028" stroke-width="1.2" opacity="0.35" fill="none"/>
<path d="M39.2 812 Q38.9 837.0 39.3 862" stroke="#d4b48c" stroke-width="1.2" opacity="0.35" fill="none"/>
<path d="M0 812v50" stroke="#5a402a" stroke-width="0.8" opacity="0.5"/>
<rect x="67.0" y="812" width="157.5" height="50" fill="#84644a"/>
<rect x="67.0" y="831.0" width="157.5" height="8.0" fill="#c8a47c"/>
<rect x="67.0" y="839.0" width="157.5" height="4.0" fill="#a68262"/>
<rect x="67.0" y="854.5" width="157.5" height="4.0" fill="#6e5038" opacity="0.7"/>
<path d="M67.0 847.0 Q145.8 849.7 224.5 845.9" stroke="#c09c74" stroke-width="1" opacity="0.45" fill="none"/>
<path d="M67.0 851.0 Q145.8 851.9 224.5 850.6" stroke="#c09c74" stroke-width="1" opacity="0.45" fill="none"/>
<path d="M67.0 859.5 Q145.8 861.9 224.5 858.5" stroke="#c09c74" stroke-width="1" opacity="0.45" fill="none"/>
<path d="M67.0 812v50" stroke="#5a402a" stroke-width="0.8" opacity="0.5"/>
<rect x="224.5" y="812" width="39.9" height="50" fill="#8c6a4a"/>
<path d="M233.5 812 Q233.2 837.0 233.6 862" stroke="#5e4028" stroke-width="1.2" opacity="0.35" fill="none"/>
<path d="M237.2 812 Q237.6 837.0 237.1 862" stroke="#d4b48c" stroke-width="1.2" opacity="0.35" fill="none"/>
<rect x="263.9" y="812" width="39.9" height="50" fill="#b8946e"/>
<path d="M285.6 812 Q280.7 837.0 287.1 862" stroke="#5e4028" stroke-width="1.2" opacity="0.35" fill="none"/>
<path d="M275.8 812 Q273.5 837.0 276.4 862" stroke="#d4b48c" stroke-width="1.2" opacity="0.35" fill="none"/>
<rect x="303.2" y="812" width="39.9" height="50" fill="#7c5c40"/>
<path d="M334.4 812 Q337.1 837.0 333.6 862" stroke="#5e4028" stroke-width="1.2" opacity="0.35" fill="none"/>
<path d="M313.6 812 Q316.5 837.0 312.7 862" stroke="#d4b48c" stroke-width="1.2" opacity="0.35" fill="none"/>
<rect x="342.6" y="812" width="39.9" height="50" fill="#a88462"/>
<path d="M352.4 812 Q353.5 837.0 352.0 862" stroke="#5e4028" stroke-width="1.2" opacity="0.35" fill="none"/>
<path d="M352.0 812 Q347.0 837.0 353.5 862" stroke="#d4b48c" stroke-width="1.2" opacity="0.35" fill="none"/>
<path d="M224.5 812v50" stroke="#5a402a" stroke-width="0.8" opacity="0.5"/>
<rect x="382.0" y="812" width="157.5" height="50" fill="#84644a"/>
<rect x="382.0" y="831.0" width="157.5" height="8.0" fill="#c8a47c"/>
<rect x="382.0" y="839.0" width="157.5" height="4.0" fill="#a68262"/>
<rect x="382.0" y="854.5" width="157.5" height="4.0" fill="#6e5038" opacity="0.7"/>
<path d="M382.0 847.0 Q460.8 849.2 539.5 846.1" stroke="#c09c74" stroke-width="1" opacity="0.45" fill="none"/>
<path d="M382.0 851.0 Q460.8 849.3 539.5 851.7" stroke="#c09c74" stroke-width="1" opacity="0.45" fill="none"/>
<path d="M382.0 859.5 Q460.8 857.8 539.5 860.2" stroke="#c09c74" stroke-width="1" opacity="0.45" fill="none"/>
<path d="M382.0 812v50" stroke="#5a402a" stroke-width="0.8" opacity="0.5"/>
<rect x="539.5" y="812" width="39.9" height="50" fill="#b8946e"/>
<path d="M572.5 812 Q576.2 837.0 571.4 862" stroke="#5e4028" stroke-width="1.2" opacity="0.35" fill="none"/>
<path d="M553.4 812 Q558.0 837.0 552.0 862" stroke="#d4b48c" stroke-width="1.2" opacity="0.35" fill="none"/>
<rect x="578.9" y="812" width="39.9" height="50" fill="#7c5c40"/>
<path d="M599.6 812 Q601.4 837.0 599.1 862" stroke="#5e4028" stroke-width="1.2" opacity="0.35" fill="none"/>
<path d="M590.4 812 Q594.8 837.0 589.1 862" stroke="#d4b48c" stroke-width="1.2" opacity="0.35" fill="none"/>
<rect x="618.2" y="812" width="39.9" height="50" fill="#a88462"/>
<path d="M643.2 812 Q647.9 837.0 641.8 862" stroke="#5e4028" stroke-width="1.2" opacity="0.35" fill="none"/>
<path d="M648.8 812 Q646.8 837.0 649.4 862" stroke="#d4b48c" stroke-width="1.2" opacity="0.35" fill="none"/>
<rect x="657.6" y="812" width="39.9" height="50" fill="#8c6a4a"/>
<path d="M673.5 812 Q670.1 837.0 674.5 862" stroke="#5e4028" stroke-width="1.2" opacity="0.35" fill="none"/>
<path d="M667.5 812 Q663.2 837.0 668.9 862" stroke="#d4b48c" stroke-width="1.2" opacity="0.35" fill="none"/>
<path d="M539.5 812v50" stroke="#5a402a" stroke-width="0.8" opacity="0.5"/>
<rect x="697.0" y="812" width="157.5" height="50" fill="#84644a"/>
<rect x="697.0" y="831.0" width="157.5" height="8.0" fill="#c8a47c"/>
<rect x="697.0" y="839.0" width="157.5" height="4.0" fill="#a68262"/>
<rect x="697.0" y="854.5" width="157.5" height="4.0" fill="#6e5038" opacity="0.7"/>
<path d="M697.0 847.0 Q775.8 845.8 854.5 847.5" stroke="#c09c74" stroke-width="1" opacity="0.45" fill="none"/>
<path d="M697.0 851.0 Q775.8 851.6 854.5 850.8" stroke="#c09c74" stroke-width="1" opacity="0.45" fill="none"/>
<path d="M697.0 859.5 Q775.8 856.5 854.5 860.7" stroke="#c09c74" stroke-width="1" opacity="0.45" fill="none"/>
<path d="M697.0 812v50" stroke="#5a402a" stroke-width="0.8" opacity="0.5"/>
<rect x="854.5" y="812" width="39.9" height="50" fill="#7c5c40"/>
<path d="M879.1 812 Q877.5 837.0 879.6 862" stroke="#5e4028" stroke-width="1.2" opacity="0.35" fill="none"/>
<path d="M868.9 812 Q872.1 837.0 868.0 862" stroke="#d4b48c" stroke-width="1.2" opacity="0.35" fill="none"/>
<rect x="893.9" y="812" width="39.9" height="50" fill="#a88462"/>
<path d="M913.0 812 Q911.2 837.0 913.6 862" stroke="#5e4028" stroke-width="1.2" opacity="0.35" fill="none"/>
<path d="M913.0 812 Q915.1 837.0 912.4 862" stroke="#d4b48c" stroke-width="1.2" opacity="0.35" fill="none"/>
<rect x="933.2" y="812" width="39.9" height="50" fill="#8c6a4a"/>
<path d="M940.7 812 Q945.5 837.0 939.3 862" stroke="#5e4028" stroke-width="1.2" opacity="0.35" fill="none"/>
<path d="M939.8 812 Q942.3 837.0 939.0 862" stroke="#d4b48c" stroke-width="1.2" opacity="0.35" fill="none"/>
<rect x="972.6" y="812" width="39.9" height="50" fill="#b8946e"/>
<path d="M1001.8 812 Q997.0 837.0 1003.3 862" stroke="#5e4028" stroke-width="1.2" opacity="0.35" fill="none"/>
<path d="M1000.2 812 Q998.9 837.0 1000.6 862" stroke="#d4b48c" stroke-width="1.2" opacity="0.35" fill="none"/>
<path d="M854.5 812v50" stroke="#5a402a" stroke-width="0.8" opacity="0.5"/>
<rect x="1012.0" y="812" width="157.5" height="50" fill="#84644a"/>
<rect x="1012.0" y="831.0" width="157.5" height="8.0" fill="#c8a47c"/>
<rect x="1012.0" y="839.0" width="157.5" height="4.0" fill="#a68262"/>
<rect x="1012.0" y="854.5" width="157.5" height="4.0" fill="#6e5038" opacity="0.7"/>
<path d="M1012.0 847.0 Q1090.8 847.5 1169.5 846.8" stroke="#c09c74" stroke-width="1" opacity="0.45" fill="none"/>
<path d="M1012.0 851.0 Q1090.8 848.1 1169.5 852.2" stroke="#c09c74" stroke-width="1" opacity="0.45" fill="none"/>
<path d="M1012.0 859.5 Q1090.8 856.8 1169.5 860.6" stroke="#c09c74" stroke-width="1" opacity="0.45" fill="none"/>
<path d="M1012.0 812v50" stroke="#5a402a" stroke-width="0.8" opacity="0.5"/>
<rect x="1169.5" y="812" width="31.8" height="50" fill="#a88462"/>
<path d="M1178.1 812 Q1182.7 837.0 1176.8 862" stroke="#5e4028" stroke-width="1.2" opacity="0.35" fill="none"/>
<path d="M1178.5 812 Q1181.0 837.0 1177.7 862" stroke="#d4b48c" stroke-width="1.2" opacity="0.35" fill="none"/>
<rect x="1200.8" y="812" width="31.8" height="50" fill="#8c6a4a"/>
<path d="M1225.8 812 Q1230.2 837.0 1224.4 862" stroke="#5e4028" stroke-width="1.2" opacity="0.35" fill="none"/>
<path d="M1213.0 812 Q1211.5 837.0 1213.4 862" stroke="#d4b48c" stroke-width="1.2" opacity="0.35" fill="none"/>
<path d="M1169.5 812v50" stroke="#5a402a" stroke-width="0.8" opacity="0.5"/>
<rect x="0" y="862" width="67.0" height="12" fill="#84644a"/>
<rect x="0" y="863.2" width="67.0" height="5.4" fill="#b89470"/>
<path d="M0 870.4 Q33.5 870.5 67.0 870.3" stroke="#c09c74" stroke-width="1" opacity="0.45" fill="none"/>
<path d="M0 872.2 Q33.5 873.9 67.0 871.5" stroke="#c09c74" stroke-width="1" opacity="0.45" fill="none"/>
<path d="M0 862v12" stroke="#5a402a" stroke-width="0.8" opacity="0.5"/>
<rect x="67.0" y="862" width="39.9" height="12" fill="#b8946e"/>
<path d="M75.9 862 Q78.4 868.0 75.1 874" stroke="#5e4028" stroke-width="1.2" opacity="0.35" fill="none"/>
<path d="M94.9 862 Q98.5 868.0 93.8 874" stroke="#d4b48c" stroke-width="1.2" opacity="0.35" fill="none"/>
<rect x="106.4" y="862" width="39.9" height="12" fill="#7c5c40"/>
<path d="M113.3 862 Q117.7 868.0 112.0 874" stroke="#5e4028" stroke-width="1.2" opacity="0.35" fill="none"/>
<path d="M114.8 862 Q113.2 868.0 115.3 874" stroke="#d4b48c" stroke-width="1.2" opacity="0.35" fill="none"/>
<rect x="145.8" y="862" width="39.9" height="12" fill="#a88462"/>
<path d="M168.5 862 Q172.7 868.0 167.2 874" stroke="#5e4028" stroke-width="1.2" opacity="0.35" fill="none"/>
<path d="M161.0 862 Q165.3 868.0 159.8 874" stroke="#d4b48c" stroke-width="1.2" opacity="0.35" fill="none"/>
<rect x="185.1" y="862" width="39.9" height="12" fill="#8c6a4a"/>
<path d="M206.1 862 Q204.2 868.0 206.6 874" stroke="#5e4028" stroke-width="1.2" opacity="0.35" fill="none"/>
<path d="M199.8 862 Q196.5 868.0 200.7 874" stroke="#d4b48c" stroke-width="1.2" opacity="0.35" fill="none"/>
<path d="M67.0 862v12" stroke="#5a402a" stroke-width="0.8" opacity="0.5"/>
<rect x="224.5" y="862" width="157.5" height="12" fill="#84644a"/>
<rect x="224.5" y="863.2" width="157.5" height="5.4" fill="#b89470"/>
<path d="M224.5 870.4 Q303.2 867.9 382.0 871.4" stroke="#c09c74" stroke-width="1" opacity="0.45" fill="none"/>
<path d="M224.5 872.2 Q303.2 870.1 382.0 873.0" stroke="#c09c74" stroke-width="1" opacity="0.45" fill="none"/>
<path d="M224.5 862v12" stroke="#5a402a" stroke-width="0.8" opacity="0.5"/>
<rect x="382.0" y="862" width="39.9" height="12" fill="#7c5c40"/>
<path d="M406.9 862 Q411.9 868.0 405.4 874" stroke="#5e4028" stroke-width="1.2" opacity="0.35" fill="none"/>
<path d="M392.4 862 Q387.8 868.0 393.7 874" stroke="#d4b48c" stroke-width="1.2" opacity="0.35" fill="none"/>
<rect x="421.4" y="862" width="39.9" height="12" fill="#a88462"/>
<path d="M454.5 862 Q454.8 868.0 454.4 874" stroke="#5e4028" stroke-width="1.2" opacity="0.35" fill="none"/>
<path d="M438.5 862 Q435.8 868.0 439.3 874" stroke="#d4b48c" stroke-width="1.2" opacity="0.35" fill="none"/>
<rect x="460.8" y="862" width="39.9" height="12" fill="#8c6a4a"/>
<path d="M483.0 862 Q486.3 868.0 482.0 874" stroke="#5e4028" stroke-width="1.2" opacity="0.35" fill="none"/>
<path d="M479.2 862 Q478.4 868.0 479.5 874" stroke="#d4b48c" stroke-width="1.2" opacity="0.35" fill="none"/>
<rect x="500.1" y="862" width="39.9" height="12" fill="#b8946e"/>
<path d="M507.6 862 Q511.7 868.0 506.3 874" stroke="#5e4028" stroke-width="1.2" opacity="0.35" fill="none"/>
<path d="M506.9 862 Q506.9 868.0 507.0 874" stroke="#d4b48c" stroke-width="1.2" opacity="0.35" fill="none"/>
<path d="M382.0 862v12" stroke="#5a402a" stroke-width="0.8" opacity="0.5"/>
<rect x="539.5" y="862" width="157.5" height="12" fill="#84644a"/>
<rect x="539.5" y="863.2" width="157.5" height="5.4" fill="#b89470"/>
<path d="M539.5 870.4 Q618.2 872.4 697.0 869.6" stroke="#c09c74" stroke-width="1" opacity="0.45" fill="none"/>
<path d="M539.5 872.2 Q618.2 870.0 697.0 873.1" stroke="#c09c74" stroke-width="1" opacity="0.45" fill="none"/>
<path d="M539.5 862v12" stroke="#5a402a" stroke-width="0.8" opacity="0.5"/>
<rect x="697.0" y="862" width="39.9" height="12" fill="#a88462"/>
<path d="M723.1 862 Q727.6 868.0 721.7 874" stroke="#5e4028" stroke-width="1.2" opacity="0.35" fill="none"/>
<path d="M720.3 862 Q723.2 868.0 719.4 874" stroke="#d4b48c" stroke-width="1.2" opacity="0.35" fill="none"/>
<rect x="736.4" y="862" width="39.9" height="12" fill="#8c6a4a"/>
<path d="M745.2 862 Q744.6 868.0 745.4 874" stroke="#5e4028" stroke-width="1.2" opacity="0.35" fill="none"/>
<path d="M746.4 862 Q749.8 868.0 745.4 874" stroke="#d4b48c" stroke-width="1.2" opacity="0.35" fill="none"/>
<rect x="775.8" y="862" width="39.9" height="12" fill="#b8946e"/>
<path d="M789.8 862 Q789.3 868.0 789.9 874" stroke="#5e4028" stroke-width="1.2" opacity="0.35" fill="none"/>
<path d="M809.2 862 Q812.7 868.0 808.1 874" stroke="#d4b48c" stroke-width="1.2" opacity="0.35" fill="none"/>
<rect x="815.1" y="862" width="39.9" height="12" fill="#7c5c40"/>
<path d="M847.9 862 Q847.5 868.0 848.1 874" stroke="#5e4028" stroke-width="1.2" opacity="0.35" fill="none"/>
<path d="M834.5 862 Q836.8 868.0 833.8 874" stroke="#d4b48c" stroke-width="1.2" opacity="0.35" fill="none"/>
<path d="M697.0 862v12" stroke="#5a402a" stroke-width="0.8" opacity="0.5"/>
<rect x="854.5" y="862" width="157.5" height="12" fill="#84644a"/>
<rect x="854.5" y="863.2" width="157.5" height="5.4" fill="#b89470"/>
<path d="M854.5 870.4 Q933.2 870.3 1012.0 870.5" stroke="#c09c74" stroke-width="1" opacity="0.45" fill="none"/>
<path d="M854.5 872.2 Q933.2 870.9 1012.0 872.7" stroke="#c09c74" stroke-width="1" opacity="0.45" fill="none"/>
<path d="M854.5 862v12" stroke="#5a402a" stroke-width="0.8" opacity="0.5"/>
<rect x="1012.0" y="862" width="39.9" height="12" fill="#8c6a4a"/>
<path d="M1029.0 862 Q1025.5 868.0 1030.1 874" stroke="#5e4028" stroke-width="1.2" opacity="0.35" fill="none"/>
<path d="M1028.3 862 Q1033.2 868.0 1026.8 874" stroke="#d4b48c" stroke-width="1.2" opacity="0.35" fill="none"/>
<rect x="1051.4" y="862" width="39.9" height="12" fill="#b8946e"/>
<path d="M1083.7 862 Q1085.0 868.0 1083.4 874" stroke="#5e4028" stroke-width="1.2" opacity="0.35" fill="none"/>
<path d="M1071.0 862 Q1069.4 868.0 1071.5 874" stroke="#d4b48c" stroke-width="1.2" opacity="0.35" fill="none"/>
<rect x="1090.8" y="862" width="39.9" height="12" fill="#7c5c40"/>
<path d="M1099.1 862 Q1096.8 868.0 1099.8 874" stroke="#5e4028" stroke-width="1.2" opacity="0.35" fill="none"/>
<path d="M1118.2 862 Q1121.9 868.0 1117.1 874" stroke="#d4b48c" stroke-width="1.2" opacity="0.35" fill="none"/>
<rect x="1130.1" y="862" width="39.9" height="12" fill="#a88462"/>
<path d="M1146.0 862 Q1148.9 868.0 1145.1 874" stroke="#5e4028" stroke-width="1.2" opacity="0.35" fill="none"/>
<path d="M1157.4 862 Q1159.3 868.0 1156.8 874" stroke="#d4b48c" stroke-width="1.2" opacity="0.35" fill="none"/>
<path d="M1012.0 862v12" stroke="#5a402a" stroke-width="0.8" opacity="0.5"/>
<rect x="1169.5" y="862" width="62.5" height="12" fill="#84644a"/>
<rect x="1169.5" y="863.2" width="62.5" height="5.4" fill="#b89470"/>
<path d="M1169.5 870.4 Q1200.8 871.4 1232.0 870.0" stroke="#c09c74" stroke-width="1" opacity="0.45" fill="none"/>
<path d="M1169.5 872.2 Q1200.8 873.8 1232.0 871.6" stroke="#c09c74" stroke-width="1" opacity="0.45" fill="none"/>
<path d="M1169.5 862v12" stroke="#5a402a" stroke-width="0.8" opacity="0.5"/>
<rect x="0" y="874" width="1228" height="2" fill="#e4e0dc"/>
<path d="M0 862.5H1228" stroke="#6a4c34" stroke-width="0.8" opacity="0.6"/>
</g>
<path d="M0 826 L467 822 L1228 815" fill="none" stroke="#000" stroke-width="1.6"/>
<rect x="624" y="783" width="15" height="40" fill="#f0c08a" stroke="#000" stroke-width="1"/>
<rect x="639" y="783" width="23" height="26" fill="#f4cc98" stroke="#000" stroke-width="1"/>
<rect x="662" y="783" width="238" height="16" fill="#f0c48c" stroke="#000" stroke-width="1"/>
<rect x="662" y="799" width="238" height="4" fill="#f0c48c" stroke="#000" stroke-width="1"/>
<rect x="662" y="803" width="238" height="7" fill="#f4c890" stroke="#000" stroke-width="1"/>
<rect x="900" y="783" width="23" height="26" fill="#f4cc98" stroke="#000" stroke-width="1"/>
<rect x="923" y="783" width="17" height="37" fill="#f0c08a" stroke="#000" stroke-width="1"/>
</svg>
</div>
<div class="a" style="left:848px;top:62px;width:80px;height:23px;background:#88c4ec;border-radius:0 0 11px 11px;box-shadow:0 2px 3px rgba(90,60,30,0.35)"></div>
<div class="t" id="f37" style="left:866.9px;top:65.34px;font-size:12.3px;transform-origin:0 0;transform:scaleX(0.8697)">Nézet 1 *</div>
<svg style="left:1470px;top:62px" width="35" height="26" viewBox="0 0 35 26"><path d="M7.5 4 A16 18.7 0 0 0 23.5 22.7 H31 V4 Z" fill="#88c4ec"/><path d="M11 10.9H28L19.5 18Z" fill="#222"/></svg>
<div class="a" style="left:272px;top:93px;width:25px;height:112px;border-radius:12px;background:linear-gradient(180deg,#f0f0f2,#dcdde2);border:1px solid #9ed4f0;box-shadow:2px 2px 4px rgba(60,40,20,0.35)"></div>
<svg style="left:280px;top:96px" width="12" height="12" viewBox="0 0 12 12"><path d="M1 1c4 2 7 5 9 9M3 0c4 2 7 5 9 9" fill="none" stroke="#333" stroke-width="0.8"/></svg>
<svg style="left:280px;top:121px" width="9" height="18" viewBox="0 0 9 18"><path d="M4.5 0v1M4.5 2.5v1M4.5 5v9" stroke="#111" stroke-width="1.4"/><path d="M0 11h9l-4.5 6z" fill="#111"/></svg>
<svg style="left:279px;top:150px" width="12" height="11" viewBox="0 0 12 11"><circle cx="4.5" cy="4.5" r="3.2" fill="none" stroke="#111" stroke-width="1.5"/><path d="M7 7l4 3.5" stroke="#111" stroke-width="2.2"/></svg>
<svg style="left:282px;top:175px" width="9" height="18" viewBox="0 0 9 18"><path d="M0 0l8 8.5l-8 8.5z" fill="#111"/></svg>
<div class="a" style="left:273px;top:801px;width:25px;height:112px;border-radius:12px;background:linear-gradient(180deg,#f0f0f2,#dcdde2);border:1px solid #9ed4f0;box-shadow:2px 2px 4px rgba(60,40,20,0.35)"></div>
<svg style="left:280px;top:808px" width="12" height="10" viewBox="0 0 12 10"><path d="M0 1h2M3 1h9M0 5h2M3 5h8M0 9h2M3 9h6" stroke="#111" stroke-width="1.2"/></svg>
<svg style="left:282px;top:833px" width="9" height="18" viewBox="0 0 9 18"><path d="M0 0l8 8.5l-8 8.5z" fill="#111"/></svg>
<svg style="left:280px;top:869px" width="9" height="9" viewBox="0 0 9 9"><path d="M4.5 0v9M0 4.5h9" stroke="#111" stroke-width="1.6"/></svg>
<svg style="left:280px;top:900px" width="9" height="2" viewBox="0 0 9 2"><path d="M0 1h9" stroke="#111" stroke-width="1.8"/></svg>
<div class="a" style="left:273px;top:918px;width:211px;height:25px;border-radius:12px;background:linear-gradient(180deg,#f0f0f2,#dcdde2);border:1px solid #9ed4f0"></div>
<svg style="left:283px;top:920px" width="15" height="21" viewBox="0 0 15 21"><path d="M7.5 0.5L14 20L7.5 14L1 20z" fill="#b8b8b8" stroke="#111" stroke-width="1.1"/></svg>
<svg style="left:305px;top:920px" width="20" height="20" viewBox="0 0 20 20"><circle cx="5" cy="14" r="3" fill="none" stroke="#0a8a8a" stroke-width="1.2"/><path d="M5 9v10M0 14h10" stroke="#0a6a6a" stroke-width="1"/><path d="M8 11l7-7M8 11h3M8 11v-3" stroke="#111" stroke-width="1.2" fill="none"/><path d="M16 1v5M13.5 3.5h5" stroke="#111" stroke-width="0.9"/></svg>
<svg style="left:330px;top:919px" width="22" height="22" viewBox="0 0 22 22"><path d="M3 3v17h17" fill="none" stroke="#111" stroke-width="1.3"/><path d="M0.5 4l2.5-4l2.5 4zM18 17.5l4 2.5l-4 2.5z" fill="#111"/><circle cx="3" cy="20" r="1.3" fill="#111"/><text x="7" y="13" font-family="Liberation Sans" font-weight="bold" font-size="11">R</text></svg>
<div class="t" id="f38" style="left:359.5px;top:924.84px;font-size:12.3px;color:#111;transform-origin:0 0;transform:scaleX(0.8397)">(x) 1.67&nbsp;&nbsp;&nbsp;(y) 2.33 m</div>
<svg style="left:471px;top:920px" width="11" height="10" viewBox="0 0 11 10"><path d="M0 0c4 1 8 4 10 9M2 0c4 1 7 4 9 8" fill="none" stroke="#777" stroke-width="0.8"/></svg>
<div class="a" style="left:738px;top:918px;width:111px;height:25px;border-radius:12px;background:linear-gradient(180deg,#f0f0f2,#dcdde2);border:1px solid #9ed4f0"></div>
<div class="t" id="f39" style="left:747.3px;top:924.58px;font-size:12.5px;color:#111;letter-spacing:0.8px;transform-origin:0 0;transform:scaleX(0.7940)">ENTER&nbsp;&nbsp;&nbsp;&nbsp;ESC</div>
<svg style="left:836px;top:920px" width="11" height="10" viewBox="0 0 11 10"><path d="M0 0c4 1 8 4 10 9M2 0c4 1 7 4 9 8" fill="none" stroke="#777" stroke-width="0.8"/></svg>
<div class="a" style="left:1473px;top:821px;width:28px;height:1px;background:#e00000"></div>
<div class="a" style="left:1505px;top:62px;width:413px;height:885px;background:#b4b4b4;border-radius:0"></div>
<div class="a" style="left:1507px;top:64px;width:409px;height:881px;border-radius:5px;background:#c8c8c8;box-shadow:inset 1px 1px 1px #888"></div>
<div class="a" style="left:1509px;top:67px;width:405px;height:875px;background:#fdf7ec;box-shadow:inset 2px 2px 3px rgba(0,0,0,0.12)"></div>
<div class="a" style="left:1637px;top:62px;width:150px;height:22px;background:#bdbdbd;border-radius:0 0 10px 10px;box-shadow:0 2px 3px rgba(0,0,0,0.25)"></div>
<div class="t" id="f40" style="left:1654.6px;top:64.55px;font-size:12.3px;transform-origin:0 0;transform:scaleX(0.8372)">Alaprajz Földszint (0 m) *</div>
<svg style="left:1509px;top:280px" width="410" height="445" viewBox="1509 280 410 445">
<defs><pattern id="hat" patternUnits="userSpaceOnUse" width="4.6" height="5" patternTransform="rotate(45)"><path d="M0.5 0V5" stroke="#111" stroke-width="1"/></pattern></defs>
<path fill-rule="evenodd" d="M1515 291H1648V310H1534V701H1892V310H1751V291H1911V720H1515Z" fill="url(#hat)" stroke="none"/>
<path d="M1515.5 291.5H1647.5V309.5H1534.5V700.5H1891.5V309.5H1751.5V291.5H1910.5V719.5H1515.5Z" fill="none" stroke="#000" stroke-width="2"/>
<rect x="1648.5" y="291.5" width="58" height="17" fill="none" stroke="#222" stroke-width="0.8"/>
<path d="M1648 299.5H1751M1648 302.5H1751M1650 297v7M1652 297v7M1704 297v7M1706 297v7M1708 297v7M1749 297v7" stroke="#222" stroke-width="0.8"/>
<path d="M1710 303 A37 37 0 0 0 1747 341 V303" fill="none" stroke="#222" stroke-width="0.9"/>
<path d="M1510 595h13M1518 590l5 5l-5 5" fill="none" stroke="#333" stroke-width="0.8"/>
</svg>
<div class="a" style="left:1710px;top:852px;width:57px;height:85px;border-radius:10px;background:linear-gradient(180deg,#eef0f2,#dde0e4);border:1px solid #a8d8f0;box-shadow:2px 2px 3px rgba(0,0,0,0.25)"></div>
<div class="a" style="left:1738px;top:853px;width:1px;height:83px;background:#c4c8cc"></div>
<div class="a" style="left:1711px;top:880px;width:55px;height:1px;background:#c4c8cc"></div>
<div class="a" style="left:1711px;top:908px;width:55px;height:1px;background:#c4c8cc"></div>
<svg style="left:1714px;top:854px" width="22" height="24" viewBox="0 0 22 24"><path d="M1 20l10 3l10-5v-14l-8-3l-5 6v4h-5v6" fill="none" stroke="#222" stroke-width="0.9"/><path d="M8 7l5-6l8 6M13 1v22" fill="none" stroke="#222" stroke-width="0.9"/><rect x="15" y="11" width="3" height="7" fill="none" stroke="#222" stroke-width="0.7"/></svg>
<svg style="left:1745px;top:855px" width="14" height="22" viewBox="0 0 14 22"><circle cx="7" cy="2.5" r="2.3" fill="#111"/><path d="M7 6l-3 6l-3 9M7 6l1 7l4 8M4 9l-3 4M7 8l5 3" fill="none" stroke="#111" stroke-width="2.6" stroke-linecap="round"/></svg>
<svg style="left:1715px;top:884px" width="22" height="21" viewBox="0 0 22 21"><defs><linearGradient id="og" x1="0" y1="0" x2="1" y2="1"><stop offset="0" stop-color="#ffd040"/><stop offset="1" stop-color="#f07010"/></linearGradient></defs><path d="M1 5h14v15h-14z" fill="url(#og)" stroke="#222"/><path d="M1 5l5-4h15l-6 4z" fill="#fff" stroke="#222"/><path d="M15 5l6-4v14l-6 5z" fill="#aaa" stroke="#222"/></svg>
<svg style="left:1744px;top:885px" width="18" height="18" viewBox="0 0 18 18"><path d="M1 5h11v12h-11zM1 5l5-4h11l-5 4M12 17l5-4v-12" fill="none" stroke="#222" stroke-width="1"/></svg>
<svg style="left:1716px;top:913px" width="21" height="21" viewBox="0 0 21 21"><defs><radialGradient id="ball" cx="0.4" cy="0.3" r="0.7"><stop offset="0" stop-color="#ffb870"/><stop offset="0.6" stop-color="#ff9010"/><stop offset="1" stop-color="#f8b020"/></radialGradient></defs><circle cx="10" cy="10" r="10" fill="url(#ball)"/></svg>
<svg style="left:1741px;top:916px" width="24" height="14" viewBox="0 0 24 14"><path d="M1 7c5-6 17-6 22 0c-5 6-17 6-22 0z" fill="none" stroke="#111" stroke-width="1.1"/><circle cx="12" cy="7" r="4" fill="#111"/><path d="M2 4c5-5 15-5 20 0" fill="none" stroke="#111" stroke-width="0.8"/></svg>
<svg style="left:1780px;top:849px" width="135" height="92" viewBox="1780 849 135 92"><path d="M1810.5 863.5a11 11 0 0 1 11-11h76a11 11 0 0 1 11 11v62a11 11 0 0 1 -11 11h-103a11 11 0 0 1 -11 -11v-7a11 11 0 0 1 11 -11h5a11 11 0 0 0 11 -11z" fill="#e4e6ea" stroke="#a8d8f0" stroke-width="1"/></svg>
<div class="a" style="left:1838px;top:853px;width:1px;height:83px;background:#c4c8cc"></div>
<div class="a" style="left:1866px;top:853px;width:1px;height:83px;background:#c4c8cc"></div>
<div class="a" style="left:1810px;top:880px;width:85px;height:1px;background:#c4c8cc"></div>
<div class="a" style="left:1810px;top:908px;width:85px;height:1px;background:#c4c8cc"></div>
<div class="a" style="left:1894px;top:860px;width:1px;height:70px;background:#c4c8cc"></div>
<svg style="left:1817px;top:856px" width="18" height="18" viewBox="0 0 18 18"><circle cx="7" cy="7" r="5.5" fill="none" stroke="#111" stroke-width="1.6"/><path d="M4 7h6M7 4v6" stroke="#111" stroke-width="1.4"/><path d="M11 11l5 5" stroke="#111" stroke-width="2.8" stroke-linecap="round"/></svg>
<svg style="left:1843px;top:862px" width="18" height="8" viewBox="0 0 18 8"><path d="M0 8l9-8l9 8z" fill="#111"/></svg>
<svg style="left:1872px;top:858px" width="16" height="16" viewBox="0 0 16 16"><path d="M1 5v-4h4M11 1h4v4M15 11v4h-4M5 15h-4v-4" fill="none" stroke="#111" stroke-width="1.6"/><rect x="4" y="4" width="8" height="8" fill="none" stroke="#111" stroke-width="1.2"/></svg>
<svg style="left:1822px;top:885px" width="8" height="18" viewBox="0 0 8 18"><path d="M8 0l-8 9l8 9z" fill="#111"/></svg>
<svg style="left:1840px;top:884px" width="24" height="22" viewBox="0 0 24 22"><ellipse cx="12" cy="11" rx="11" ry="4.5" fill="none" stroke="#111" stroke-width="1.2"/><ellipse cx="12" cy="11" rx="4.5" ry="10.5" fill="none" stroke="#111" stroke-width="1.2"/></svg>
<svg style="left:1877px;top:885px" width="8" height="18" viewBox="0 0 8 18"><path d="M0 0l8 9l-8 9z" fill="#111"/></svg>
<svg style="left:1787px;top:918px" width="15" height="10" viewBox="0 0 15 10"><rect x="0.5" y="0.5" width="14" height="9" fill="#fff" stroke="#777" stroke-width="0.8"/><rect x="0.5" y="0.5" width="5" height="9" fill="#f8a020"/><path d="M8 3.5h6M8 6.5h6M10.5 0.5v9" stroke="#888" stroke-width="0.6"/></svg>
<svg style="left:1817px;top:913px" width="18" height="18" viewBox="0 0 18 18"><circle cx="7" cy="7" r="5.5" fill="none" stroke="#111" stroke-width="1.6"/><path d="M4 7h6" stroke="#111" stroke-width="1.6"/><path d="M11 11l5 5" stroke="#111" stroke-width="2.8" stroke-linecap="round"/></svg>
<svg style="left:1843px;top:919px" width="18" height="8" viewBox="0 0 18 8"><path d="M0 0l9 8l9-8z" fill="#111"/></svg>
<svg style="left:1872px;top:915px" width="16" height="16" viewBox="0 0 16 16"><rect x="1" y="1" width="14" height="14" fill="none" stroke="#111" stroke-width="1.4" stroke-dasharray="2.5 1.5"/><circle cx="7" cy="7" r="3" fill="none" stroke="#111" stroke-width="1.3"/><path d="M9 9l4 4" stroke="#111" stroke-width="2"/></svg>
<svg style="left:1896px;top:856px" width="11" height="11" viewBox="0 0 11 11"><path d="M0 0c4 1 8 4 10 9M2 0c4 1 7 4 9 8" fill="none" stroke="#777" stroke-width="0.8"/></svg>
<svg style="left:1899px;top:925px" width="6" height="6" viewBox="0 0 6 6"><path d="M6 0v6h-6z" fill="#111"/></svg>
<div class="a" style="left:447px;top:156px;width:1026px;height:697px;background:transparent;box-shadow:2px 3px 10px 3px rgba(30,20,8,0.7)"></div>
<div class="a" style="left:447px;top:156px;width:1026px;height:697px;border:1px solid #111;background:linear-gradient(90deg,#9a8a78,#8a7a68 40%,#8e7e6c)"></div>
<div class="a" style="left:448px;top:157px;width:1024px;height:695px;border:1px solid #fff;background:#8a7a6a"></div>
<div class="a" style="left:449px;top:158px;width:1022px;height:22px;background:linear-gradient(90deg,#d8d4d0 0px,#c8c0b8 50px,#a09080 140px,#968470 400px,#988674 800px,#a89a8a 920px,#beb4aa 1022px)"></div>
<div class="a" style="left:880px;top:166px;width:330px;height:10px;border-radius:5px;background:rgba(60,45,30,0.2);filter:blur(3px)"></div>
<div class="a" style="left:449px;top:158px;width:1022px;height:22px;background:linear-gradient(180deg,rgba(255,255,255,0.25),rgba(255,255,255,0) 60%)"></div>
<div class="t" id="f54" style="left:455.6px;top:162.74px;font-size:12.3px;color:#000;transform-origin:0 0;transform:scaleX(0.9716)">Függöny</div>
<div class="a" style="left:1450px;top:161px;width:17px;height:17px;border:1px solid #5a4a40;border-radius:3px;background:linear-gradient(180deg,#f4a890 0%,#e88a70 40%,#c84020 55%,#e07050 100%)"></div>
<svg style="left:1454px;top:165px" width="9" height="9" viewBox="0 0 9 9"><path d="M1.5 1.5L7.5 7.5M7.5 1.5L1.5 7.5" stroke="#3a4a6a" stroke-width="3.2"/><path d="M1.5 1.5L7.5 7.5M7.5 1.5L1.5 7.5" stroke="#fff" stroke-width="1.8"/></svg>
<div class="a" style="left:452px;top:179px;width:1016px;height:669px;border:1px solid #fff"></div>
<div class="a" style="left:453px;top:180px;width:1014px;height:667px;border:1px solid #000;background:#fff"></div>
<div class="a" style="left:454px;top:181px;width:1012px;height:665px;background:#f0f0f0"></div>
<div class="a" style="left:454px;top:181px;width:1012px;height:2px;background:#fff"></div>
<div class="a" style="left:455px;top:181px;width:3px;height:406px;background:#f0f0f0"></div>
<div class="a" style="left:458px;top:182px;width:1004px;height:405px;border-top:2px solid #6c6c6c;border-left:2px solid #6c6c6c;border-right:2px solid #f8f8f8;border-bottom:2px solid #f8f8f8;background:#fdf7ec"></div>
<svg style="left:460px;top:184px" width="1000" height="401" viewBox="460 184 1000 401">
<defs>
<g id="bigfl"><g fill="#66676d"><circle cx="9.50" cy="0.00" r="4.2"/><circle cx="6.72" cy="6.72" r="4.2"/><circle cx="0.00" cy="9.50" r="4.2"/><circle cx="-6.72" cy="6.72" r="4.2"/><circle cx="-9.50" cy="0.00" r="4.2"/><circle cx="-6.72" cy="-6.72" r="4.2"/><circle cx="-0.00" cy="-9.50" r="4.2"/><circle cx="6.72" cy="-6.72" r="4.2"/></g><circle r="10" fill="#66676d"/><circle r="9" fill="#e8e6e0"/><g fill="#a8ccd6"><ellipse cx="0" cy="-5" rx="1.8" ry="3"/><ellipse cx="0" cy="5" rx="1.8" ry="3"/><ellipse cx="-5" cy="0" rx="3" ry="1.8"/><ellipse cx="5" cy="0" rx="3" ry="1.8"/><ellipse cx="3.6" cy="3.6" rx="1.8" ry="2.6" transform="rotate(-45 3.6 3.6)"/><ellipse cx="-3.6" cy="-3.6" rx="1.8" ry="2.6" transform="rotate(-45 -3.6 -3.6)"/><ellipse cx="3.6" cy="-3.6" rx="1.8" ry="2.6" transform="rotate(45 3.6 -3.6)"/><ellipse cx="-3.6" cy="3.6" rx="1.8" ry="2.6" transform="rotate(45 -3.6 3.6)"/></g><circle r="1.8" fill="#c0cc80"/></g>
<g id="smfl"><circle r="9.5" fill="#a6c6d0"/><circle r="7.5" fill="#5c5d63"/><circle r="3.6" fill="#dedbd4"/></g>
<pattern id="flw" patternUnits="userSpaceOnUse" width="62" height="74" x="848" y="261">
 <rect width="62" height="74" fill="#a7a5a2"/>
 <ellipse cx="52" cy="44" rx="6.5" ry="11" fill="#d8d4cc"/>
 <ellipse cx="9" cy="8" rx="4" ry="7.5" fill="#b4c27a" transform="rotate(-35 9 8)"/>
 <circle cx="12" cy="63" r="8.5" fill="#b8c68c"/>
 <circle cx="10" cy="61" r="2" fill="#cad6a4"/>
 <use href="#bigfl" x="22" y="32"/>
 <use href="#smfl" x="47" y="16"/>
 <ellipse cx="40" cy="64" rx="5" ry="3.5" fill="#6c6d72"/>
 <ellipse cx="40" cy="64" rx="2.5" ry="1.6" fill="#d8d6d0"/>
 <path d="M56 0c2 4 2 8 -1 11" stroke="#b4c27a" stroke-width="3" fill="none"/>
 <ellipse cx="34" cy="50" rx="3" ry="5" fill="#9cc0ca" opacity="0.8"/>
</pattern>
<filter id="soft" x="-5%" y="-5%" width="110%" height="110%"><feGaussianBlur stdDeviation="0.7"/></filter>
<linearGradient id="shL" x1="0" y1="0" x2="1" y2="0"><stop offset="0" stop-color="#000" stop-opacity="0"/><stop offset="0.55" stop-color="#000" stop-opacity="0.05"/><stop offset="1" stop-color="#000" stop-opacity="0.35"/></linearGradient>
<linearGradient id="shR" x1="0" y1="0" x2="1" y2="0"><stop offset="0" stop-color="#000" stop-opacity="0"/><stop offset="0.6" stop-color="#000" stop-opacity="0.08"/><stop offset="1" stop-color="#000" stop-opacity="0.4"/></linearGradient>
</defs>
<clipPath id="cL"><path d="M847 245 L945 225 L877 408 L886 573 L870 578 L848 580 Z"/></clipPath><clipPath id="cR"><path d="M980 218 L1078 197 L1079 537 L1040 540 L1046 366 Z"/></clipPath>
<g clip-path="url(#cL)"><rect x="830" y="215" width="130" height="380" fill="url(#flw)" filter="url(#soft)"/></g>
<g clip-path="url(#cR)"><rect x="970" y="185" width="120" height="370" fill="url(#flw)" filter="url(#soft)"/></g>
<path d="M868 412 L877 408 L886 573 L871 578 Z" fill="#1a1a1a" opacity="0.35"/>
<path d="M1068 380 L1078 372 L1083 470 L1079 537 L1068 538 Z" fill="#1a1a1a" opacity="0.4"/>
<path d="M1078 197 L1083 460 L1079 537 Z" fill="#a7a5a2"/>
<g stroke="#0a0a0a" fill="none" stroke-linecap="round">
<path d="M945 225 L877 408" stroke-width="1.3"/>
<path d="M897 302 L874 406" stroke-width="1.2"/>
<path d="M908 300 L877 405" stroke-width="1.2"/>
<path d="M919 296 L879 405" stroke-width="1.3"/>
<path d="M932 262 L881 404" stroke-width="1.0"/>
<path d="M938 244 L883 402" stroke-width="1.0"/>
<path d="M867 412 L871 578" stroke-width="1.2"/>
<path d="M871 410 L875 578" stroke-width="1.1"/>
<path d="M874 410 L878 577" stroke-width="1.3"/>
<path d="M877 408 L881 576" stroke-width="1.0"/>
<path d="M879 410 L883 575" stroke-width="1.2"/>
<path d="M882 415 L885 574" stroke-width="1.0"/>
<path d="M877 408 L886 573" stroke-width="1.3"/>
<path d="M980 218 L1046 366" stroke-width="1.2"/>
<path d="M1057 272 L1077 362" stroke-width="1.3"/>
<path d="M1066 268 L1078 362" stroke-width="1.1"/>
<path d="M1075 264 L1078 300" stroke-width="1.0"/>
<path d="M1046 366 L1040 540 L1078 537" stroke-width="1.1"/>
<path d="M1070 380 L1071 536" stroke-width="1.1"/>
<path d="M1073 375 L1076 536" stroke-width="1.2"/>
<path d="M1077 372 L1082 460" stroke-width="1.1"/>
<path d="M1082 460 L1079 537" stroke-width="1.1"/>
<path d="M1068 440 L1069 520" stroke-width="0.9"/>
</g>
<path d="M847 246 L847 580 L1078 537 M847 246 L1080 196 L1079 537" fill="none" stroke="#1a20e0" stroke-width="1.8" stroke-dasharray="4 3"/>
<path d="M840 247 L1090 194" stroke="#333" stroke-width="1.3"/>
<circle cx="839" cy="247" r="5" fill="#b8bccc" stroke="#555" stroke-width="0.8"/><path d="M833 243 v11 l5-3" fill="#333"/>
<circle cx="1091" cy="194" r="5" fill="#b8bccc" stroke="#555" stroke-width="0.8"/><path d="M1080 196 h6 v5" fill="#333"/>
</svg>
<div class="a" style="left:459px;top:595px;width:28px;height:28px;border:1px solid #888;border-bottom:none;border-radius:3px 3px 0 0;background:linear-gradient(180deg,#e6e6e6 0%,#dadada 50%,#c6c6c6 52%,#d4d4d4 100%)"></div>
<div class="a" style="left:519px;top:595px;width:28px;height:28px;border:1px solid #888;border-bottom:none;border-radius:3px 3px 0 0;background:linear-gradient(180deg,#e6e6e6 0%,#dadada 50%,#c6c6c6 52%,#d4d4d4 100%)"></div>
<div class="a" style="left:549px;top:595px;width:28px;height:28px;border:1px solid #888;border-bottom:none;border-radius:3px 3px 0 0;background:linear-gradient(180deg,#e6e6e6 0%,#dadada 50%,#c6c6c6 52%,#d4d4d4 100%)"></div>
<div class="a" style="left:578px;top:595px;width:28px;height:28px;border:1px solid #888;border-bottom:none;border-radius:3px 3px 0 0;background:linear-gradient(180deg,#e6e6e6 0%,#dadada 50%,#c6c6c6 52%,#d4d4d4 100%)"></div>
<div class="a" style="left:489px;top:593px;width:28px;height:30px;border:2px solid #38c0f0;border-bottom:none;border-radius:4px 4px 0 0;background:#f4f4f4"></div>
<div class="a" style="left:459px;top:622px;width:998px;height:1px;background:#9a9a9a"></div>
<svg style="left:461px;top:597px" width="24" height="24" viewBox="0 0 24 24"><path d="M3 1.5h7M6.5 2v12M1 17h5v6M10 20h14M23 16v7" stroke="#111" stroke-width="1.2" fill="none"/><path d="M4 5l2.5-3l2.5 3zM4 11l2.5 3l2.5-3zM13 17.5l-3 2.5l3 2.5zM20 17.5l3 2.5l-3 2.5z" fill="#111"/></svg>
<svg style="left:491px;top:596px" width="24" height="24" viewBox="0 0 24 24"><rect x="5" y="4" width="14" height="18" fill="#9ac0f0" stroke="#5a3010" stroke-width="1.2"/><path d="M12 4v18M5 13h14" stroke="#5a3010" stroke-width="1.5"/><path d="M0 1h10c-2 4-5 8-6 11v10h-4z" fill="#e81010"/><path d="M24 1h-10c2 4 5 8 6 11v10h4z" fill="#e81010"/><path d="M2 2v20M6 2c-1 3-1 6-2 9M18 2c1 3 1 6 2 9M22 2v20" stroke="#900" stroke-width="0.8"/></svg>
<svg style="left:521px;top:598px" width="24" height="14" viewBox="0 0 24 14"><path d="M1 6h5l2-3h3l-2 3h12l3-3v6l-3 4h-20z" fill="#b86e14" stroke="#3a1e00" stroke-width="1"/><path d="M1 6h20v7" fill="none" stroke="#3a1e00" stroke-width="0.8"/></svg>
<svg style="left:550px;top:596px" width="25" height="25" viewBox="0 0 25 25"><path d="M4 2h14l2 2v19h-14z" fill="#fff" stroke="#555" stroke-width="0.8"/><path d="M17 2l3-0v4" fill="none" stroke="#555"/><path d="M1 21L16 5l3 3L4 23z" fill="#d8b848" stroke="#333" stroke-width="0.8"/></svg>
<svg style="left:584px;top:600px" width="16" height="16" viewBox="0 0 16 16"><rect x="0.5" y="0.5" width="15" height="15" fill="#5858d0"/><rect x="3" y="1" width="10" height="7" fill="#f0f0ff"/><rect x="4" y="10" width="7" height="5" fill="#e0e0f0"/><rect x="5" y="11" width="3" height="3" fill="#222"/></svg>
<div class="a" style="left:1309px;top:594px;width:24px;height:26px;border:1px solid #707070;border-radius:3px;background:linear-gradient(180deg,#f2f2f2 0%,#ebebeb 48%,#dddddd 52%,#cfcfcf 100%);"></div>
<div class="a" style="left:1340px;top:594px;width:24px;height:26px;border:1px solid #707070;border-radius:3px;background:linear-gradient(180deg,#f2f2f2 0%,#ebebeb 48%,#dddddd 52%,#cfcfcf 100%);"></div>
<div class="a" style="left:1408px;top:594px;width:24px;height:26px;border:1px solid #707070;border-radius:3px;background:linear-gradient(180deg,#f2f2f2 0%,#ebebeb 48%,#dddddd 52%,#cfcfcf 100%);"></div>
<div class="a" style="left:1435px;top:594px;width:24px;height:26px;border:1px solid #707070;border-radius:3px;background:linear-gradient(180deg,#f2f2f2 0%,#ebebeb 48%,#dddddd 52%,#cfcfcf 100%);"></div>
<div class="a" style="left:1366px;top:594px;width:24px;height:26px;border:1px solid #c0c0c0;border-radius:3px;background:#f4f4f4"></div>
<svg style="left:1314px;top:601px" width="14" height="13" viewBox="0 0 14 13"><path d="M1 4h8v8h-8z" fill="#f8e070" stroke="#111" stroke-width="1.2"/><path d="M1 4l3-3h8l-3 3M9 12l3-3v-8" fill="#f4f0f0" stroke="#111" stroke-width="1.2"/></svg>
<svg style="left:1345px;top:600px" width="14" height="14" viewBox="0 0 14 14"><path d="M2 3v5h5z" fill="#1a5ad0"/><path d="M3 6c2-4 8-4 9 0c1 3-2 6-4 7" fill="none" stroke="#1a5ad0" stroke-width="2.4"/></svg>
<svg style="left:1371px;top:600px" width="14" height="14" viewBox="0 0 14 14" opacity="0.45"><path d="M12 3v5h-5z" fill="#1a5ad0"/><path d="M11 6c-2-4-8-4-9 0c-1 3 2 6 4 7" fill="none" stroke="#1a5ad0" stroke-width="2.4"/></svg>
<svg style="left:1411px;top:598px" width="19" height="18" viewBox="0 0 19 18"><circle cx="11" cy="6" r="5" fill="#d8eef0" stroke="#4a8a9a" stroke-width="1.2"/><path d="M7 10L1 16" stroke="#222" stroke-width="2.5"/><path d="M15 11v7M11.5 14.5h7" stroke="#1a50c0" stroke-width="2"/></svg>
<svg style="left:1438px;top:598px" width="19" height="18" viewBox="0 0 19 18"><circle cx="11" cy="6" r="5" fill="#d8eef0" stroke="#4a8a9a" stroke-width="1.2"/><path d="M7 10L1 16" stroke="#222" stroke-width="2.5"/><path d="M11.5 14.5h7" stroke="#1a50c0" stroke-width="2"/></svg>
<div class="t" id="f55" style="left:466.4px;top:655.50px;font-size:12px;transform-origin:0 0;transform:scaleX(0.8920)">Vastagság</div>
<div class="a" style="left:467px;top:676px;width:90px;height:21px;background:#fff;border:1px solid #e0e0e0;border-radius:2px"></div>
<div class="t" id="f56" style="left:472.7px;top:679.30px;font-size:12px;transform-origin:0 0;transform:scaleX(0.8886)">0.06 m</div>
<svg style="left:543px;top:684px" width="9" height="5" viewBox="0 0 9 5"><path d="M0 0h9l-4.5 5z" fill="#111"/></svg>
<div class="a" style="left:467px;top:721px;width:13px;height:13px;border:1px solid #8e8f8f;background:linear-gradient(135deg,#dcdcdc,#fff)"></div><svg style="left:469px;top:723px" width="9" height="9" viewBox="0 0 9 9"><path d="M1 4.5l2.5 3l4.5-7" fill="none" stroke="#2a3a8a" stroke-width="1.6"/></svg>
<div class="t" id="f57" style="left:482.2px;top:721.60px;font-size:12px;transform-origin:0 0;transform:scaleX(0.9388)">Osztott függöny</div>
<div class="t" id="f58" style="left:466.4px;top:748.80px;font-size:12px;transform-origin:0 0;transform:scaleX(0.8875)">Oldalak közti távolság</div>
<div class="a" style="left:656px;top:744px;width:75px;height:19px;background:#fff;border:1px solid #d8dce0;border-top-color:#c0c4c8;border-radius:2px"></div><div class="t" id="f59" style="left:713.5px;top:747.80px;font-size:12px;transform-origin:0 0;transform:scaleX(0.8159)">17</div>
<svg style="left:466px;top:779px" width="15" height="17" viewBox="0 0 15 17"><path d="M1 1h13v15h-13zM7.5 1v15" fill="none" stroke="#111" stroke-width="1.4"/></svg>
<div class="a" style="left:494px;top:783px;width:188px;height:3px;background:#e8e8e8;border-top:1px solid #b8b8b8;border-bottom:1px solid #fff"></div>
<div class="a" style="left:524px;top:777px;width:10px;height:14px;border:1px solid #8a8a8a;border-radius:4px 4px 2px 2px;background:linear-gradient(90deg,#fafafa,#e4e4e4 60%,#d0d0d0)"></div>
<svg style="left:697px;top:777px" width="15" height="15" viewBox="0 0 15 15"><path d="M1 0v15M14 0v15M4 0v15M11 0v15" stroke="#111" stroke-width="1.3"/><path d="M5 7.5h5" stroke="#c01010" stroke-width="1.2"/><path d="M4.5 7.5l2-2v4zM10.5 7.5l-2-2v4z" fill="#c01010"/></svg>
<div class="t" id="f60" style="left:463.1px;top:820.10px;font-size:12px;transform-origin:0 0;transform:scaleX(0.9036)">Függöny</div>
<div class="t" id="f61" style="left:840.4px;top:655.50px;font-size:12px;transform-origin:0 0;transform:scaleX(0.8783)">Gyűrődés</div>
<div class="a" style="left:1021px;top:652px;width:75px;height:19px;background:#fff;border:1px solid #d8dce0;border-top-color:#c0c4c8;border-radius:2px"></div><div class="t" id="f62" style="left:1084.4px;top:655.80px;font-size:12px;transform-origin:0 0;transform:scaleX(0.7327)">1</div>
<div class="a" style="left:842px;top:685px;width:18px;height:1px;background:#111"></div>
<div class="a" style="left:870px;top:685px;width:186px;height:3px;background:#e8e8e8;border-top:1px solid #b8b8b8;border-bottom:1px solid #fff"></div>
<div class="a" style="left:871px;top:679px;width:10px;height:14px;border:1px solid #8a8a8a;border-radius:4px 4px 2px 2px;background:linear-gradient(90deg,#fafafa,#e4e4e4 60%,#d0d0d0)"></div>
<svg style="left:1065px;top:681px" width="22" height="8" viewBox="0 0 22 8"><path d="M1 5c1.5-4 3.5-4 5 0s3.5 4 5 0s3.5-4 5 0s3 3 5 1" fill="none" stroke="#111" stroke-width="1.1"/></svg>
<div class="t" id="f63" style="left:840.4px;top:702.55px;font-size:12px;transform-origin:0 0;transform:scaleX(0.8700)">Behúzás középen</div>
<div class="a" style="left:1021px;top:697px;width:75px;height:19px;background:#fff;border:1px solid #d8dce0;border-top-color:#c0c4c8;border-radius:2px"></div><div class="t" id="f64" style="left:1077px;top:700.80px;font-size:12px;transform-origin:0 0;transform:scaleX(0.9207)">70</div>
<svg style="left:843px;top:723px" width="13" height="15" viewBox="0 0 13 15"><rect x="0.7" y="0.7" width="11.6" height="13.6" fill="none" stroke="#111" stroke-width="1.3"/></svg>
<div class="a" style="left:870px;top:730px;width:186px;height:3px;background:#e8e8e8;border-top:1px solid #b8b8b8;border-bottom:1px solid #fff"></div>
<div class="a" style="left:994px;top:724px;width:10px;height:14px;border:1px solid #8a8a8a;border-radius:4px 4px 2px 2px;background:linear-gradient(90deg,#fafafa,#e4e4e4 60%,#d0d0d0)"></div>
<svg style="left:1072px;top:723px" width="14" height="15" viewBox="0 0 14 15"><path d="M1 1h12v13h-12z" fill="none" stroke="#111" stroke-width="1.2"/><path d="M1 1c6 2 9 6 10 13" fill="none" stroke="#111" stroke-width="1"/><path d="M1 1v13M1 8h7" stroke="#c01010" stroke-width="1.2"/><path d="M8 6l3 2l-3 2z" fill="#c01010"/></svg>
<div class="t" id="f65" style="left:840.4px;top:748.80px;font-size:12px;transform-origin:0 0;transform:scaleX(0.8906)">Behúzás távolsága a karnistól</div>
<div class="a" style="left:1021px;top:743px;width:75px;height:19px;background:#fff;border:1px solid #d8dce0;border-top-color:#c0c4c8;border-radius:2px"></div><div class="t" id="f66" style="left:1077px;top:746.80px;font-size:12px;transform-origin:0 0;transform:scaleX(0.9207)">50</div>
<svg style="left:837px;top:778px" width="18" height="18" viewBox="0 0 18 18"><path d="M1 2h8l8 2v13h-3v-10l-13 -2" fill="none" stroke="#111" stroke-width="1.2"/><path d="M1 2h8M1 5h6" stroke="#c01010" stroke-width="1.2"/><path d="M4 2l-1.5 3h3z" fill="#c01010"/></svg>
<div class="a" style="left:870px;top:783px;width:186px;height:3px;background:#e8e8e8;border-top:1px solid #b8b8b8;border-bottom:1px solid #fff"></div>
<div class="a" style="left:959px;top:777px;width:10px;height:14px;border:1px solid #8a8a8a;border-radius:4px 4px 2px 2px;background:linear-gradient(90deg,#fafafa,#e4e4e4 60%,#d0d0d0)"></div>
<svg style="left:1068px;top:777px" width="18" height="16" viewBox="0 0 18 16"><path d="M4 1h13v14h-3" fill="none" stroke="#111" stroke-width="1.2"/><path d="M4 1c6 3 9 7 11 14" fill="none" stroke="#111" stroke-width="1"/><path d="M3 1v14M0 13h8" stroke="#c01010" stroke-width="1.2"/></svg>
<div class="a" style="left:1051px;top:822px;width:13px;height:13px;border:1px solid #8e8f8f;background:linear-gradient(135deg,#dcdcdc,#fff)"></div><svg style="left:1053px;top:824px" width="9" height="9" viewBox="0 0 9 9"><path d="M1 4.5l2.5 3l4.5-7" fill="none" stroke="#2a3a8a" stroke-width="1.6"/></svg>
<div class="t" id="f67" style="left:1066.5px;top:822.80px;font-size:12px;transform-origin:0 0;transform:scaleX(0.8898)">Automatikus frissítés a lapon</div>
<div class="t" id="f68" style="left:1180.5px;top:655.50px;font-size:12px;transform-origin:0 0;transform:scaleX(0.8816)">Véletlenszerűségi szint</div>
<div class="a" style="left:1362px;top:652px;width:73px;height:19px;background:#fff;border:1px solid #d8dce0;border-top-color:#c0c4c8;border-radius:2px"></div><div class="t" id="f69" style="left:1412.5px;top:655.80px;font-size:12px;transform-origin:0 0;transform:scaleX(0.8137)">100</div>
<svg style="left:1180px;top:677px" width="21" height="9" viewBox="0 0 21 9"><path d="M1 6c2-6 4-6 6 0s4 6 6 0s4-5 7-1" fill="none" stroke="#111" stroke-width="1.2"/></svg>
<div class="a" style="left:1211px;top:682px;width:187px;height:3px;background:#e8e8e8;border-top:1px solid #b8b8b8;border-bottom:1px solid #fff"></div>
<div class="a" style="left:1388px;top:676px;width:10px;height:14px;border:1px solid #8a8a8a;border-radius:4px 4px 2px 2px;background:linear-gradient(90deg,#fafafa,#e4e4e4 60%,#d0d0d0)"></div>
<svg style="left:1405px;top:675px" width="22" height="10" viewBox="0 0 22 10"><path d="M1 5c1-5 3-5 4 0s3 5 4 0s2-5 3 0s2 5 3 0s2-5 3 0s2 4 3 1" fill="none" stroke="#111" stroke-width="1.1"/></svg>
<div class="t" id="f70" style="left:1180.5px;top:700.90px;font-size:12px;transform-origin:0 0;transform:scaleX(0.8762)">Részletességi szint</div>
<div class="a" style="left:1362px;top:697px;width:73px;height:19px;background:#fff;border:1px solid #d8dce0;border-top-color:#c0c4c8;border-radius:2px"></div><div class="t" id="f71" style="left:1423.4px;top:700.80px;font-size:12px;transform-origin:0 0;transform:scaleX(0.8075)">6</div>
<svg style="left:1180px;top:723px" width="21" height="8" viewBox="0 0 21 8"><path d="M1 7l4-6l4 6l4-6l4 6l3-4" fill="none" stroke="#a01010" stroke-width="1.1"/></svg>
<div class="a" style="left:1211px;top:728px;width:187px;height:3px;background:#e8e8e8;border-top:1px solid #b8b8b8;border-bottom:1px solid #fff"></div>
<div class="a" style="left:1388px;top:722px;width:10px;height:14px;border:1px solid #8a8a8a;border-radius:4px 4px 2px 2px;background:linear-gradient(90deg,#fafafa,#e4e4e4 60%,#d0d0d0)"></div>
<svg style="left:1405px;top:723px" width="22" height="9" viewBox="0 0 22 9"><path d="M1 6c2-6 4-6 6 0s4 6 6 0s4-5 7-1" fill="none" stroke="#a01010" stroke-width="1.2"/></svg>
<div class="t" id="f72" style="left:1180.5px;top:746.60px;font-size:12px;transform-origin:0 0;transform:scaleX(0.8847)">Gravitáció</div>
<div class="a" style="left:1362px;top:743px;width:73px;height:19px;background:#fff;border:1px solid #d8dce0;border-top-color:#c0c4c8;border-radius:2px"></div><div class="t" id="f73" style="left:1423.4px;top:746.80px;font-size:12px;transform-origin:0 0;transform:scaleX(0.8075)">2</div>
<svg style="left:1184px;top:776px" width="14" height="16" viewBox="0 0 14 16"><path d="M1 1h12v14h-2v-4z" fill="none" stroke="#111" stroke-width="1.2"/><path d="M1 1l10 10" stroke="#111" stroke-width="1.2"/></svg>
<div class="a" style="left:1211px;top:781px;width:187px;height:3px;background:#e8e8e8;border-top:1px solid #b8b8b8;border-bottom:1px solid #fff"></div>
<div class="a" style="left:1247px;top:775px;width:10px;height:14px;border:1px solid #8a8a8a;border-radius:4px 4px 2px 2px;background:linear-gradient(90deg,#fafafa,#e4e4e4 60%,#d0d0d0)"></div>
<svg style="left:1412px;top:773px" width="14" height="16" viewBox="0 0 14 16"><path d="M1 1h12v14h-3l-1-5z" fill="none" stroke="#111" stroke-width="1.2"/><path d="M1 1c4 2 7 6 8 9" fill="none" stroke="#111" stroke-width="1.2"/></svg>
<div class="a" style="left:1243px;top:818px;width:23px;height:23px;border:1px solid #707070;border-radius:3px;background:linear-gradient(180deg,#f2f2f2 0%,#ebebeb 48%,#dddddd 52%,#cfcfcf 100%);"></div>
<svg style="left:1246px;top:821px" width="17" height="17" viewBox="0 0 17 17"><path d="M2.5 8.5a6 6 0 0 1 10.5-4" fill="none" stroke="#111" stroke-width="2.4"/><path d="M14.5 8.5a6 6 0 0 1 -10.5 4" fill="none" stroke="#111" stroke-width="2.4"/><path d="M10 1l5 0.5l-1 5zM7 16l-5-0.5l1-5z" fill="#111"/></svg>
<div class="a" style="left:1275px;top:818px;width:90px;height:23px;border:1px solid #3c7fb1;border-radius:3px;background:linear-gradient(180deg,#eaf6fd 0%,#d9f0fc 48%,#bee6fd 52%,#a7d9f5 100%);box-shadow:inset 0 0 0 1px #c8e8f8"></div>
<div class="t" id="f74" style="left:1312.4px;top:823.00px;font-size:12px;transform-origin:0 0;transform:scaleX(0.8303)">OK</div>
<div class="a" style="left:1374px;top:818px;width:90px;height:23px;border:1px solid #707070;border-radius:3px;background:linear-gradient(180deg,#f2f2f2 0%,#ebebeb 48%,#dddddd 52%,#cfcfcf 100%);"></div>
<div class="t" id="f75" style="left:1402.4px;top:823.00px;font-size:12px;transform-origin:0 0;transform:scaleX(0.8493)">Mégse</div>
<svg style="left:1454px;top:841px" width="12" height="5" viewBox="0 0 12 5"><path d="M4 0L0 4.5M8 0L4 4.5M12 0L8 4.5" stroke="#a0a0a0" stroke-width="1.2"/></svg>
<div class="a" style="left:0;top:946px;width:1920px;height:31px;background:linear-gradient(90deg,#dcdce9 0px,#e2e2ee 400px,#eeeef4 760px,#f2f2f6 1000px)"></div>
<div class="a" style="left:0;top:977px;width:1920px;height:6px;background:#f4f4f8"></div>
<div class="a" style="left:5px;top:955px;width:2px;height:14px;background:repeating-linear-gradient(180deg,#445 0 2px,transparent 2px 4px)"></div>
<div class="a" style="left:21px;top:951px;width:18px;height:18px;background:#b8b8c0;border:1px solid #9898a4"></div>
<svg style="left:23px;top:953px" width="14" height="14" viewBox="0 0 14 14"><rect x="0.5" y="1.5" width="13" height="12" rx="1" fill="#f4f8ff" stroke="#3a60a8"/><rect x="0.5" y="1.5" width="13" height="3" fill="#4a78c8"/><path d="M3 7h2M6 7h2M9 7h2M3 10h2M6 10h2M9 10h2" stroke="#8aa0c8" stroke-width="1.2"/><circle cx="5" cy="7" r="1.3" fill="#e85020"/><rect x="0" y="11" width="14" height="3" fill="#3a5aa8"/></svg>
<div class="a" style="left:44px;top:956px;width:140px;height:5px;border-top:1px solid #4a7cc0;background:#eef2f8;border-bottom:1px solid #fff"></div><div class="a" style="left:128px;top:953px;width:4px;height:11px;border:1px solid #4a7cc0;border-top:none;border-right:none;background:#f0f4fa"></div>
<div class="a" style="left:193px;top:952px;width:103px;height:18px;background:#f8f8fa;border:1px solid #c8c8d4"></div>
<div class="t" id="f76" style="left:212px;top:955.40px;font-size:12px;transform-origin:0 0;transform:scaleX(0.8965)">augusztus 16</div>
<div class="a" style="left:303px;top:950px;width:1px;height:23px;background:#a0a0b0;box-shadow:1px 0 0 #fff"></div>
<div class="a" style="left:309px;top:951px;width:18px;height:18px;background:#b8b8c0;border:1px solid #9898a4"></div>
<svg style="left:310px;top:952px" width="16" height="16" viewBox="0 0 16 16"><circle cx="8" cy="8" r="7" fill="#f4f8ff" stroke="#3a60a8" stroke-width="1.6"/><path d="M8 3v5h4" fill="none" stroke="#1a3a88" stroke-width="1.3"/><circle cx="4" cy="5" r="0.6" fill="#e85020"/><circle cx="4" cy="11" r="0.6" fill="#e85020"/><circle cx="12" cy="11" r="0.6" fill="#e85020"/></svg>
<div class="a" style="left:334px;top:956px;width:139px;height:5px;border-top:1px solid #4a7cc0;background:#eef2f8;border-bottom:1px solid #fff"></div><div class="a" style="left:395px;top:953px;width:4px;height:11px;border:1px solid #4a7cc0;border-top:none;border-right:none;background:#f0f4fa"></div>
<div class="a" style="left:483px;top:952px;width:58px;height:18px;background:#f8f8fa;border:1px solid #c8c8d4"></div>
<div class="t" id="f77" style="left:498.8px;top:955.40px;font-size:12px;transform-origin:0 0;transform:scaleX(0.8724)">10:29</div>
<div class="a" style="left:548px;top:950px;width:1px;height:23px;background:#a0a0b0;box-shadow:1px 0 0 #fff"></div>
<div class="a" style="left:553px;top:952px;width:97px;height:19px;background:#fff;border:1px solid #b8b8c4"></div>
<div class="a" style="left:635px;top:953px;width:14px;height:17px;background:linear-gradient(180deg,#f0f0f0,#d4d4d8);border-left:1px solid #c8c8d0"></div>
<svg style="left:639px;top:960px" width="7" height="4" viewBox="0 0 7 4"><path d="M0 0h7l-3.5 4z" fill="#777"/></svg>
<div class="t" id="f78" style="left:556px;top:957.00px;font-size:12px;transform-origin:0 0;transform:scaleX(0.8964)">Kikapcsolva</div>
<div class="a" style="left:654px;top:952px;width:21px;height:18px;border:1px solid #b0b0b8;border-radius:2px;background:linear-gradient(180deg,#f8f8f8,#dcdce0)"></div>
<div class="a" style="left:678px;top:952px;width:21px;height:18px;border:1px solid #b0b0b8;border-radius:2px;background:linear-gradient(180deg,#f8f8f8,#dcdce0)"></div>
<div class="a" style="left:702px;top:952px;width:21px;height:18px;border:1px solid #b0b0b8;border-radius:2px;background:linear-gradient(180deg,#f8f8f8,#dcdce0)"></div>
<svg style="left:657px;top:954px" width="15" height="15" viewBox="0 0 15 15"><path d="M2 5l5-3l6 3v6l-6 3l-5-3z" fill="#e8e8e8" stroke="#333" stroke-width="0.8"/><path d="M7 8l6 3v3h-6z" fill="#111"/><path d="M0 6h14" stroke="#333" stroke-width="0.8"/></svg>
<svg style="left:681px;top:953px" width="16" height="16" viewBox="0 0 16 16"><circle cx="8" cy="8" r="7.2" fill="#1a60b8"/><path d="M3 4c2 1 3 3 2 5c2 1 2 3 1 5M9 1c1 2 3 2 5 3c-1 2-3 3-2 5" fill="#2aa040"/><path d="M10 9c2 0 4 1 4 3" fill="none" stroke="#fff" stroke-width="0.6"/></svg>
<svg style="left:704px;top:953px" width="16" height="16" viewBox="0 0 16 16"><path d="M8 0l1.5 4l4-2l-1.5 4l4 2l-4 1.5l2 4l-4-1.5l-2 4l-1.5-4l-4 2l1.5-4l-4-1.5l4-2l-2-4l4 2z" fill="#e82020"/><circle cx="8" cy="8" r="4" fill="#ffe020"/></svg>
<div class="a" style="left:0;top:983px;width:1920px;height:14px;background:#fff;border-top:1px solid #a8aab8"></div>
<div class="a" style="left:0;top:983px;width:19px;height:14px;background:linear-gradient(90deg,#e4e4f0,#b0b0d0)"></div>
<div class="a" style="left:19px;top:983px;width:2px;height:14px;background:#dcdce8"></div>
<div class="a" style="left:84px;top:983px;width:1px;height:14px;background:#c8c8d4"></div>
<div class="a" style="left:21px;top:984px;width:63px;height:13px;overflow:hidden"><div class="t" id="f79" style="left:1.5px;top:2.04px;font-size:12.3px;transform-origin:0 0;transform:scaleX(0.9664)">Input mező</div></div>
<div class="a" style="left:1903px;top:984px;width:13px;height:13px;background:linear-gradient(180deg,#f0f0f4,#c8c8d0);border-left:1px solid #aaa"></div>
<svg style="left:1906px;top:990px" width="7" height="4" viewBox="0 0 7 4"><path d="M0 0h7l-3.5 4z" fill="#555"/></svg>
<div class="a" style="left:0;top:997px;width:1920px;height:32px;background:linear-gradient(180deg,#eceef0 0%,#d8dadf 30%,#b0b4bc 55%,#a6aab2 100%)"></div>
<div class="a" style="left:40px;top:998px;width:1px;height:31px;background:#b8bac0;box-shadow:1px 0 0 #f0f0f4"></div>
<div class="a" style="left:80px;top:998px;width:1px;height:31px;background:#b8bac0;box-shadow:1px 0 0 #f0f0f4"></div>
<div class="a" style="left:119px;top:998px;width:1px;height:31px;background:#b8bac0;box-shadow:1px 0 0 #f0f0f4"></div>
<div class="a" style="left:159px;top:998px;width:1px;height:31px;background:#b8bac0;box-shadow:1px 0 0 #f0f0f4"></div>
<div class="a" style="left:199px;top:998px;width:1px;height:31px;background:#b8bac0;box-shadow:1px 0 0 #f0f0f4"></div>
<div class="a" style="left:239px;top:998px;width:1px;height:31px;background:#b8bac0;box-shadow:1px 0 0 #f0f0f4"></div>
<div class="a" style="left:445px;top:998px;width:1px;height:31px;background:#b8bac0;box-shadow:1px 0 0 #f0f0f4"></div>
<div class="a" style="left:527px;top:998px;width:1px;height:31px;background:#b8bac0;box-shadow:1px 0 0 #f0f0f4"></div>
<div class="a" style="left:605px;top:998px;width:1px;height:31px;background:#b8bac0;box-shadow:1px 0 0 #f0f0f4"></div>
<div class="a" style="left:760px;top:998px;width:1px;height:31px;background:#b8bac0;box-shadow:1px 0 0 #f0f0f4"></div>
<div class="a" style="left:833px;top:998px;width:1px;height:31px;background:#b8bac0;box-shadow:1px 0 0 #f0f0f4"></div>
<div class="a" style="left:901px;top:998px;width:1px;height:31px;background:#b8bac0;box-shadow:1px 0 0 #f0f0f4"></div>
<div class="a" style="left:969px;top:998px;width:1px;height:31px;background:#b8bac0;box-shadow:1px 0 0 #f0f0f4"></div>
<div class="a" style="left:1037px;top:998px;width:1px;height:31px;background:#b8bac0;box-shadow:1px 0 0 #f0f0f4"></div>
<div class="a" style="left:3px;top:1001px;width:32px;height:27px;border:1px solid #c0c4cc;border-radius:3px;background:linear-gradient(180deg,#f8f8f8 0%,#ebebeb 45%,#d2d2d4 50%,#d8d8da 100%)"></div>
<div class="a" style="left:43px;top:1001px;width:32px;height:27px;border:1px solid #c0c4cc;border-radius:3px;background:linear-gradient(180deg,#f8f8f8 0%,#ebebeb 45%,#d2d2d4 50%,#d8d8da 100%)"></div>
<div class="a" style="left:83px;top:1001px;width:32px;height:27px;border:1px solid #c0c4cc;border-radius:3px;background:linear-gradient(180deg,#f8f8f8 0%,#ebebeb 45%,#d2d2d4 50%,#d8d8da 100%)"></div>
<div class="a" style="left:123px;top:1001px;width:32px;height:27px;border:1px solid #c0c4cc;border-radius:3px;background:linear-gradient(180deg,#f8f8f8 0%,#ebebeb 45%,#d2d2d4 50%,#d8d8da 100%)"></div>
<div class="a" style="left:163px;top:1001px;width:32px;height:27px;border:1px solid #c0c4cc;border-radius:3px;background:linear-gradient(180deg,#f8f8f8 0%,#ebebeb 45%,#d2d2d4 50%,#d8d8da 100%)"></div>
<div class="a" style="left:203px;top:1001px;width:32px;height:27px;border:1px solid #c0c4cc;border-radius:3px;background:linear-gradient(180deg,#f8f8f8 0%,#ebebeb 45%,#d2d2d4 50%,#d8d8da 100%)"></div>
<div class="a" style="left:451px;top:1001px;width:33px;height:27px;border:1px solid #c0c4cc;border-radius:3px;background:linear-gradient(180deg,#f8f8f8 0%,#ebebeb 45%,#d2d2d4 50%,#d8d8da 100%)"></div>
<div class="a" style="left:490px;top:1001px;width:33px;height:27px;border:1px solid #c0c4cc;border-radius:3px;background:linear-gradient(180deg,#f8f8f8 0%,#ebebeb 45%,#d2d2d4 50%,#d8d8da 100%)"></div>
<div class="a" style="left:531px;top:1001px;width:33px;height:27px;border:1px solid #c0c4cc;border-radius:3px;background:linear-gradient(180deg,#f8f8f8 0%,#ebebeb 45%,#d2d2d4 50%,#d8d8da 100%)"></div>
<div class="a" style="left:568px;top:1001px;width:35px;height:27px;border:1px solid #c0c4cc;border-radius:3px;background:linear-gradient(180deg,#f8f8f8 0%,#ebebeb 45%,#d2d2d4 50%,#d8d8da 100%)"></div>
<div class="a" style="left:768px;top:1001px;width:61px;height:27px;border:1px solid #c0c4cc;border-radius:3px;background:linear-gradient(180deg,#f8f8f8 0%,#ebebeb 45%,#d2d2d4 50%,#d8d8da 100%)"></div>
<div class="a" style="left:837px;top:1001px;width:60px;height:27px;border:1px solid #c0c4cc;border-radius:3px;background:linear-gradient(180deg,#f8f8f8 0%,#ebebeb 45%,#d2d2d4 50%,#d8d8da 100%)"></div>
<div class="a" style="left:906px;top:1001px;width:59px;height:27px;border:1px solid #c0c4cc;border-radius:3px;background:linear-gradient(180deg,#f8f8f8 0%,#ebebeb 45%,#d2d2d4 50%,#d8d8da 100%)"></div>
<div class="a" style="left:973px;top:1001px;width:60px;height:27px;border:1px solid #c0c4cc;border-radius:3px;background:linear-gradient(180deg,#f8f8f8 0%,#ebebeb 45%,#d2d2d4 50%,#d8d8da 100%)"></div>
<svg style="left:6px;top:1001px" width="26" height="28" viewBox="0 0 26 28"><g fill="#5a5a5a"><circle cx="13" cy="14" r="10"/><rect x="11" y="1" width="4" height="26"/><rect x="0" y="12" width="26" height="4"/><rect x="11" y="1" width="4" height="26" transform="rotate(45 13 14)"/><rect x="11" y="1" width="4" height="26" transform="rotate(-45 13 14)"/></g><circle cx="13" cy="14" r="6" fill="#8a8a8a"/><circle cx="13" cy="14" r="3.5" fill="#5a5a5a"/><circle cx="13" cy="14" r="2" fill="#aaa"/></svg>
<svg style="left:47px;top:1003px" width="24" height="22" viewBox="0 0 24 22"><g stroke="#999" stroke-width="0.9"><path d="M1.5 2h3M3 0.5v3"/><path d="M1.5 8h3M3 6.5v3"/><path d="M1.5 14h3M3 12.5v3"/><path d="M1.5 20h3M3 18.5v3"/><path d="M7.5 2h3M9 0.5v3"/><path d="M7.5 8h3M9 6.5v3"/><path d="M7.5 14h3M9 12.5v3"/><path d="M7.5 20h3M9 18.5v3"/><path d="M13.5 2h3M15 0.5v3"/><path d="M13.5 8h3M15 6.5v3"/><path d="M13.5 14h3M15 12.5v3"/><path d="M13.5 20h3M15 18.5v3"/><path d="M19.5 2h3M21 0.5v3"/><path d="M19.5 8h3M21 6.5v3"/><path d="M19.5 14h3M21 12.5v3"/><path d="M19.5 20h3M21 18.5v3"/></g></svg>
<svg style="left:86px;top:1002px" width="26" height="25" viewBox="0 0 26 25"><rect x="3" y="3" width="20" height="19" fill="#faf6de" stroke="#444" stroke-width="1.3"/><g fill="#ddd" stroke="#777" stroke-width="0.8"><rect x="0.5" y="0.5" width="4" height="4"/><rect x="21.5" y="0.5" width="4" height="4"/><rect x="0.5" y="20.5" width="4" height="4"/><rect x="21.5" y="20.5" width="4" height="4"/></g></svg>
<svg style="left:127px;top:1002px" width="26" height="26" viewBox="0 0 26 26"><g transform="translate(14 13) rotate(-45)"><path d="M-5.5 -9 V0 A5.5 5.5 0 0 0 5.5 0 V-9" stroke="#111" stroke-width="6.6" fill="none"/><path d="M-5.5 -9 V0 A5.5 5.5 0 0 0 5.5 0 V-9" stroke="#e01c24" stroke-width="4.6" fill="none"/><rect x="-8" y="-12" width="5" height="4" fill="#f2eedc" stroke="#111" stroke-width="0.9"/><rect x="3" y="-12" width="5" height="4" fill="#f2eedc" stroke="#111" stroke-width="0.9"/></g></svg>
<svg style="left:168px;top:1003px" width="22" height="22" viewBox="0 0 22 22"><path d="M2 0v21h20" fill="none" stroke="#e89090" stroke-width="1"/><path d="M2 21L12 4M2 21L20 10" stroke="#aaa" stroke-width="0.8"/></svg>
<svg style="left:206px;top:1002px" width="26" height="26" viewBox="0 0 26 26"><rect x="1" y="2" width="19" height="20" fill="#ffc800" stroke="#333" stroke-width="1" stroke-dasharray="2 1"/><path d="M13 7v16l4-4l3 6l3-1l-3-6h5z" fill="#fff" stroke="#111" stroke-width="1"/></svg>
<div class="a" style="left:244px;top:1001px;width:166px;height:25px;border:1px solid #707070;border-radius:3px;background:linear-gradient(180deg,#f4f4f4,#dedede 50%,#d0d0d0 52%,#dcdcdc)"></div>
<svg style="left:247px;top:1007px" width="16" height="11" viewBox="0 0 16 11"><path d="M1 6c4-6 10-6 14 0c-4 5-10 5-14 0z" fill="#c8d0e0" stroke="#555" stroke-width="0.6"/><circle cx="9" cy="6" r="3.2" fill="#2a3a6a"/></svg>
<div class="t" id="f80" style="left:266px;top:1006.94px;font-size:12.3px;transform-origin:0 0;transform:scaleX(0.8893)">Nézet 1</div>
<div class="a" style="left:411px;top:1001px;width:27px;height:25px;border:1px solid #707070;background:linear-gradient(180deg,#fafafa,#e4e4e4)"></div>
<svg style="left:420px;top:1011px" width="9" height="5" viewBox="0 0 9 5"><path d="M0 0h9l-4.5 5z" fill="#111"/></svg>
<svg style="left:456px;top:1003px" width="24" height="24" viewBox="0 0 24 24"><path d="M12 2l10 10h-5v10h-10v-10h-5z" fill="#c8d0dc" stroke="#a8b0bc"/></svg>
<svg style="left:495px;top:1003px" width="24" height="24" viewBox="0 0 24 24"><path d="M12 22l10-10h-5v-10h-10v10h-5z" fill="#c8d0dc" stroke="#a8b0bc"/></svg>
<svg style="left:533px;top:1001px" width="30" height="28" viewBox="0 0 30 28"><path d="M6 22l10-12" stroke="#e0a020" stroke-width="4" stroke-linecap="round"/><path d="M9 6l6-4l9 7l-4 4z" fill="#c85010" stroke="#602000" stroke-width="0.8"/><text x="15" y="27" font-family="Liberation Sans" font-size="10" fill="#333">3D</text></svg>
<svg style="left:571px;top:1001px" width="30" height="28" viewBox="0 0 30 28"><rect x="4" y="4" width="15" height="14" fill="#f8e890" stroke="#a08020" stroke-width="0.8" stroke-dasharray="2 1"/><path d="M6 22l10-12" stroke="#ccc" stroke-width="4" stroke-linecap="round"/><path d="M9 6l6-4l9 7l-4 4z" fill="#ddd" stroke="#666" stroke-width="0.8"/><text x="15" y="27" font-family="Liberation Sans" font-size="10" fill="#444">3D</text></svg>
<div class="a" style="left:609px;top:1001px;width:147px;height:26px;background:linear-gradient(180deg,#fafafa,#e8e8ea);border:1px solid #c0c0c8"></div>
<div class="a" style="left:613px;top:1003px;width:10px;height:21px;background:#000"></div>
<div class="t" id="f81" style="left:632px;top:1007.94px;font-size:12.3px;font-weight:bold;font-style:italic;transform-origin:0 0;transform:scaleX(0.9589)">11_Fal1</div>
<div class="a" style="left:729px;top:1001px;width:27px;height:26px;border:1px solid #707070;background:linear-gradient(180deg,#fafafa,#e4e4e4)"></div>
<svg style="left:738px;top:1012px" width="9" height="5" viewBox="0 0 9 5"><path d="M0 0h9l-4.5 5z" fill="#111"/></svg>
<svg style="left:772px;top:1003px" width="24" height="22" viewBox="0 0 24 22"><path d="M1 14l11-5l11 4l-11 6z" fill="#1a9040" stroke="#0a5020" stroke-width="0.6"/><path d="M1 15v2l11 5v-2z M12 20v2l11-5v-2z" fill="#e8e8e8"/><path d="M1 8l11-5l11 4l-11 6z" fill="#e02020" stroke="#801010" stroke-width="0.6"/><path d="M1 8v3l11 5v-3zM12 13v3l11-5v-3z" fill="#b01010"/></svg>
<svg style="left:811px;top:1012px" width="7" height="4" viewBox="0 0 7 4"><path d="M0 0h7l-3.5 4z" fill="#555"/></svg>
<svg style="left:842px;top:1004px" width="20" height="20" viewBox="0 0 20 20"><path d="M2 18L18 2" stroke="#3050d0" stroke-width="1.3"/><rect x="0.5" y="16.5" width="3" height="3" fill="#fff" stroke="#111" stroke-width="0.8"/><rect x="16.5" y="0.5" width="3" height="3" fill="#fff" stroke="#111" stroke-width="0.8"/></svg>
<svg style="left:879px;top:1012px" width="7" height="4" viewBox="0 0 7 4"><path d="M0 0h7l-3.5 4z" fill="#555"/></svg>
<svg style="left:909px;top:1007px" width="24" height="14" viewBox="0 0 24 14"><path d="M1 7l6-5v3h10v-3l6 5l-6 5v-3h-10v3z" fill="#fff" stroke="#777" stroke-width="0.8"/><path d="M9 7h10M16 3l5 4l-5 4" fill="none" stroke="#1a30e0" stroke-width="1.6"/></svg>
<svg style="left:947px;top:1012px" width="7" height="4" viewBox="0 0 7 4"><path d="M0 0h7l-3.5 4z" fill="#555"/></svg>
<svg style="left:978px;top:1004px" width="20" height="20" viewBox="0 0 20 20"><rect x="1" y="1" width="18" height="18" fill="none" stroke="#777" stroke-width="1.2"/><rect x="5" y="5" width="10" height="10" fill="none" stroke="#777" stroke-width="1.2"/></svg>
<svg style="left:1015px;top:1012px" width="7" height="4" viewBox="0 0 7 4"><path d="M0 0h7l-3.5 4z" fill="#555"/></svg>
</body></html>
